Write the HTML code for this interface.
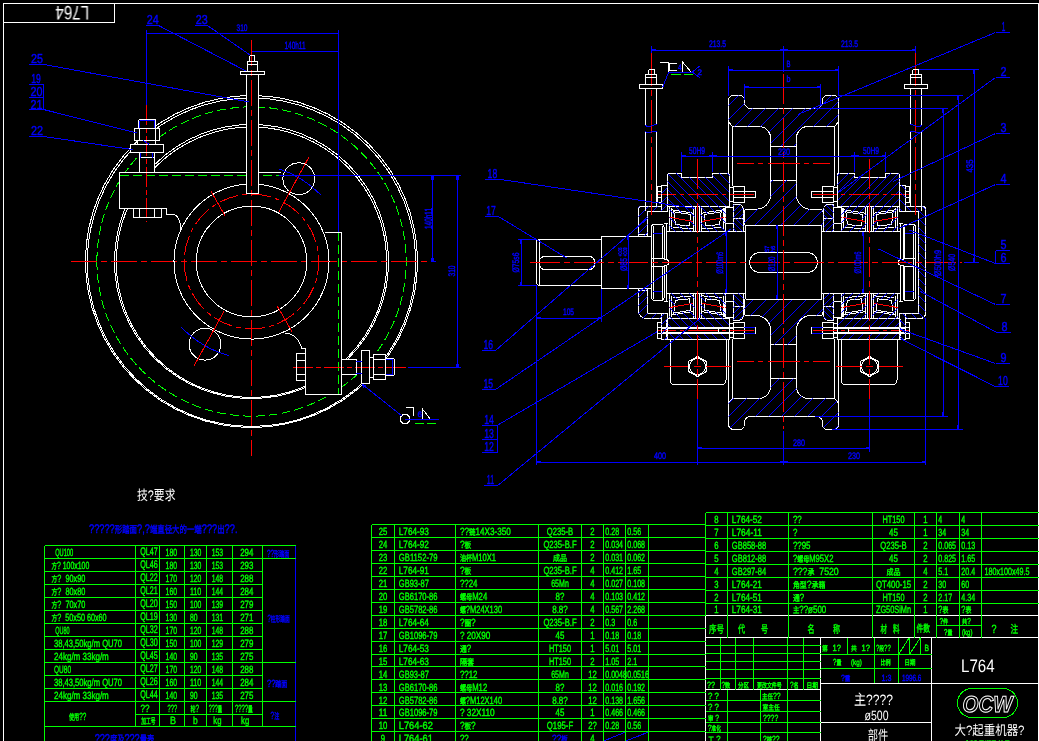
<!DOCTYPE html>
<html><head><meta charset="utf-8"><title>L764</title>
<style>html,body{margin:0;padding:0;background:#000;overflow:hidden}svg{display:block}</style>
</head><body>
<svg width="1039" height="741" viewBox="0 0 1039 741" shape-rendering="crispEdges" fill="none" stroke-width="1" font-family="'Liberation Sans', 'Noto Sans CJK SC', sans-serif">
<defs><clipPath id="k1"><path clip-rule="evenodd" d="M728.5 121.6V100.4A5 5 0 0 1 733.5 95.4H739.8A4.5 4.5 0 0 1 744.3 99.9V102A6.5 6.5 0 0 0 750.8 108.5H816.2A6.5 6.5 0 0 0 822.7 102V99.9A4.5 4.5 0 0 1 827.2 95.4H833.5A5 5 0 0 1 838.5 100.4V121.6L834.7 126.5H807.7A11.5 12.8 0 0 0 796.2 139.3V146H770.8V139.3A11.5 12.8 0 0 0 759.3 126.5H732.3Z"/></clipPath><clipPath id="k2"><path clip-rule="evenodd" d="M770.8 180V194A14.5 15.3 0 0 1 756.3 209.3H747A3 3 0 0 0 744 212.3V225.4H823V212.3A3 3 0 0 0 820 209.3H810.7A14.5 15.3 0 0 1 796.2 194V180Z"/></clipPath><clipPath id="k3"><path clip-rule="evenodd" d="M728.5 121.6V100.4A5 5 0 0 1 733.5 95.4H739.8A4.5 4.5 0 0 1 744.3 99.9V102A6.5 6.5 0 0 0 750.8 108.5H816.2A6.5 6.5 0 0 0 822.7 102V99.9A4.5 4.5 0 0 1 827.2 95.4H833.5A5 5 0 0 1 838.5 100.4V121.6L834.7 126.5H807.7A11.5 12.8 0 0 0 796.2 139.3V146H770.8V139.3A11.5 12.8 0 0 0 759.3 126.5H732.3Z" transform="translate(0,524.8) scale(1,-1)"/></clipPath><clipPath id="k4"><path clip-rule="evenodd" d="M770.8 180V194A14.5 15.3 0 0 1 756.3 209.3H747A3 3 0 0 0 744 212.3V225.4H823V212.3A3 3 0 0 0 820 209.3H810.7A14.5 15.3 0 0 1 796.2 194V180Z" transform="translate(0,524.8) scale(1,-1)"/></clipPath><clipPath id="k5"><path clip-rule="evenodd" d="M667.4 206.2V176A3 3 0 0 1 670.4 173H681.6V177.3H712.4V173H726.8A3 3 0 0 1 729.8 176V206.2ZM669.4 206.2H725.6V231.5H669.4ZM673.8 211.8L690.8 214.5L689.6 226.0L675.4 224.5ZM721.2 211.8L704.2 214.5L705.4 226.0L719.6 224.5ZM695 206.2H700V231.5H695Z"/></clipPath><clipPath id="k6"><path clip-rule="evenodd" d="M669.4 206.2H725.6V231.5H669.4ZM673.8 211.8L690.8 214.5L689.6 226.0L675.4 224.5ZM721.2 211.8L704.2 214.5L705.4 226.0L719.6 224.5ZM695 206.2H700V231.5H695Z" transform="translate(0,524.8) scale(1,-1)"/></clipPath><clipPath id="k7"><path clip-rule="evenodd" d="M666.2 318.5H729.6V339H666.2ZM661 327.4H735V333.6H661Z"/></clipPath><clipPath id="k8"><path clip-rule="evenodd" d="M667.4 206.2V176A3 3 0 0 1 670.4 173H681.6V177.3H712.4V173H726.8A3 3 0 0 1 729.8 176V206.2ZM669.4 206.2H725.6V231.5H669.4ZM673.8 211.8L690.8 214.5L689.6 226.0L675.4 224.5ZM721.2 211.8L704.2 214.5L705.4 226.0L719.6 224.5ZM695 206.2H700V231.5H695Z" transform="translate(1567,0) scale(-1,1)"/></clipPath><clipPath id="k9"><path clip-rule="evenodd" d="M669.4 206.2H725.6V231.5H669.4ZM673.8 211.8L690.8 214.5L689.6 226.0L675.4 224.5ZM721.2 211.8L704.2 214.5L705.4 226.0L719.6 224.5ZM695 206.2H700V231.5H695Z" transform="translate(1567,524.8) scale(-1,-1)"/></clipPath><clipPath id="k10"><path clip-rule="evenodd" d="M666.2 318.5H729.6V339H666.2ZM661 327.4H735V333.6H661Z" transform="translate(1567,0) scale(-1,1)"/></clipPath><clipPath id="k11"><path clip-rule="evenodd" d="M638.3 206.4H661.3V185H667.4V211H647.5V236H638.3Z"/></clipPath><clipPath id="k12"><path clip-rule="evenodd" d="M638.3 206.4H661.3V185H667.4V211H647.5V236H638.3Z" transform="translate(0,524.8) scale(1,-1)"/></clipPath><clipPath id="k13"><path clip-rule="evenodd" d="M733.2 204.7H743.3V218.5H733.2Z"/></clipPath><clipPath id="k14"><path clip-rule="evenodd" d="M733.2 218.5H743.3V231.6H733.2Z"/></clipPath><clipPath id="k15"><path clip-rule="evenodd" d="M733.2 204.7H743.3V218.5H733.2Z" transform="translate(0,524.8) scale(1,-1)"/></clipPath><clipPath id="k16"><path clip-rule="evenodd" d="M733.2 218.5H743.3V231.6H733.2Z" transform="translate(0,524.8) scale(1,-1)"/></clipPath><clipPath id="k17"><path clip-rule="evenodd" d="M733.2 204.7H743.3V218.5H733.2Z" transform="translate(1567,0) scale(-1,1)"/></clipPath><clipPath id="k18"><path clip-rule="evenodd" d="M733.2 218.5H743.3V231.6H733.2Z" transform="translate(1567,0) scale(-1,1)"/></clipPath><clipPath id="k19"><path clip-rule="evenodd" d="M733.2 204.7H743.3V218.5H733.2Z" transform="translate(1567,524.8) scale(-1,-1)"/></clipPath><clipPath id="k20"><path clip-rule="evenodd" d="M733.2 218.5H743.3V231.6H733.2Z" transform="translate(1567,524.8) scale(-1,-1)"/></clipPath><clipPath id="k21"><path clip-rule="evenodd" d="M899.7 185H905.7V206.4H925.5V318.4H905.7V339.8H899.7V313.8H918.6V211H899.7Z"/></clipPath></defs>
<rect width="1039" height="741" fill="#000"/>
<path d="M96.9 261.5A154.6 154.6 0 1 0 406.1 261.5A154.6 154.6 0 1 0 96.9 261.5" stroke="#00ff00" stroke-dasharray="9 4"/>
<path stroke="#ffffff" d="M3.5 741L3.5 3.5L1038.5 3.5L1038.5 741M3.5 22.5L114.5 22.5L114.5 3.5M85.5 261.5A166 166 0 1 0 417.5 261.5A166 166 0 1 0 85.5 261.5M87.3 262.2A164.2 164.2 0 1 0 415.7 262.2A164.2 164.2 0 1 0 87.3 262.2M114.5 261.5A137 137 0 1 0 388.5 261.5A137 137 0 1 0 114.5 261.5M116.3 262.2A135.2 135.2 0 1 0 386.7 262.2A135.2 135.2 0 1 0 116.3 262.2"/>
<path d="M119.5 172L281 172L281 176L166 176L166 208.5L119.5 208.5Z" fill="#000" stroke="none"/>
<path d="M138.5 119.2L155 119.2L155 128L138.5 128Z" fill="#000" stroke="none"/>
<path d="M134.6 128L159.7 128L159.7 140.3L134.6 140.3Z" fill="#000" stroke="none"/>
<path d="M137.7 140.3L155.4 140.3L155.4 144.3L137.7 144.3Z" fill="#000" stroke="none"/>
<path d="M130.3 144.3L163.6 144.3L163.6 152.7L130.3 152.7Z" fill="#000" stroke="none"/>
<path d="M139.7 152.7L154.2 152.7L154.2 172L139.7 172Z" fill="#000" stroke="none"/>
<path d="M133 208L161 208L161 217.5L133 217.5Z" fill="#000" stroke="none"/>
<path d="M296 353L305.7 353L305.7 348.5L341.6 348.5L341.6 394.4L305.7 394.4L305.7 380.5L296 380.5Z" fill="#000" stroke="none"/>
<path d="M341.6 359.3L361.9 359.3L361.9 374.7L341.6 374.7Z" fill="#000" stroke="none"/>
<path d="M361.9 350.5L369.3 350.5L369.3 383.4L361.9 383.4Z" fill="#000" stroke="none"/>
<path d="M369.3 357.4L373.5 357.4L373.5 377L369.3 377Z" fill="#000" stroke="none"/>
<path d="M373.5 354.6L385.5 354.6L385.5 379.3L373.5 379.3Z" fill="#000" stroke="none"/>
<path d="M385.5 358.5L394.4 358.5L394.4 375.4L385.5 375.4Z" fill="#000" stroke="none"/>
<path d="M324.5 232H341.6V394.4H305.7V348.5Z" fill="#000" stroke="none"/>
<path d="M184.2 261.5A67.3 67.3 0 1 0 318.8 261.5A67.3 67.3 0 1 0 184.2 261.5" stroke="#ff0000" stroke-dasharray="20 4 5 4"/>
<path d="M71 261.5L432.5 261.5" stroke="#ff0000" stroke-dasharray="26 4 6 4"/>
<path d="M251.5 40L251.5 456" stroke="#ff0000" stroke-dasharray="26 4 6 4"/>
<path d="M119.5 175.5L281 175.5" stroke="#00ff00" stroke-dasharray="9 4"/>
<path d="M146.5 105L146.5 222" stroke="#ff0000" stroke-dasharray="20 3 5 3"/>
<path stroke="#ffffff" d="M174 261.5A77.5 77.5 0 1 0 329 261.5A77.5 77.5 0 1 0 174 261.5M196.2 261.5A55.3 55.3 0 1 0 306.8 261.5A55.3 55.3 0 1 0 196.2 261.5M282.9 178.7A15.9 15.9 0 1 0 314.7 178.7A15.9 15.9 0 1 0 282.9 178.7M189.1 344.2A15.9 15.9 0 1 0 220.9 344.2A15.9 15.9 0 1 0 189.1 344.2M281 172.5L119.5 172.5L119.5 208.5L166.5 208.5L166.5 214.5M166 214.5H172A8 14 0 0 1 180.5 232M133.5 208.5L133.5 217.5L161.5 217.5L161.5 208.5M139.5 208.5L139.5 217.5M154.5 208.5L154.5 217.5M140 119.5H154A1.5 1.5 0 0 1 155.5 121V127A1.5 1.5 0 0 1 154 128.5H140A1.5 1.5 0 0 1 138.5 127V121A1.5 1.5 0 0 1 140 119.5ZM134.5 128.5L159.5 128.5L159.5 140.5L134.5 140.5ZM139.5 128L139.5 140.3M155.5 128L155.5 140.3M137.5 140.5L155.5 140.5L155.5 144.5L137.5 144.5ZM130.5 144.5L163.5 144.5L163.5 152.5L130.5 152.5ZM139.5 152.7L139.5 172M154.5 152.7L154.5 172M139.7 157.5L154.2 157.5"/>
<path stroke="#0000ff" d="M181 327Q203 349 229 355.5M279 169Q302 176 321 195M139.5 121L139.5 128M154.5 121L154.5 128M139.7 120.5L154.6 120.5M143 140.3L149 144.3M140.5 152.7L140.5 157.7M152.5 152.7L152.5 157.7M146.5 30L146.5 105"/>
<path stroke="#ff0000" d="M279 211.6L309.1 156.8M224 311.4L193.9 366.2M225.5 216.5L211 191.4M277.5 306.5L292 331.6"/>
<path d="M246.3 55L258.1 55L258.1 193.5L246.3 193.5Z" fill="#000" stroke="none"/>
<path d="M240 71L264 71L264 74.5L240 74.5Z" fill="#000" stroke="none"/>
<path d="M251.5 40L251.5 200" stroke="#ff0000" stroke-dasharray="26 4 6 4"/>
<path d="M338.5 232L338.5 394.4" stroke="#00ff00" stroke-dasharray="9 4"/>
<path d="M293 367.5L408 367.5" stroke="#ff0000" stroke-dasharray="20 3 5 3"/>
<path d="M415 423.5L436 423.5" stroke="#00ff00" stroke-dasharray="9 3"/>
<path stroke="#ffffff" d="M251 55.5H253A1.5 1.5 0 0 1 254.5 57V60A1.5 1.5 0 0 1 253 61.5H251A1.5 1.5 0 0 1 249.5 60V57A1.5 1.5 0 0 1 251 55.5ZM247.5 61.5L257.5 61.5L257.5 71.5L247.5 71.5ZM247.5 64.5L257 64.5M240.5 71.5L264.5 71.5L264.5 74.5L240.5 74.5ZM246.5 74.5L246.5 193.5L258.5 193.5L258.5 74.5M324.5 232.5L341.5 232.5L341.5 394.5L305.5 394.5L305.5 348.5L301.6 348.5M301.6 348.5C300 340 294 334 285.4 333M305.7 353.5L296.5 353.5L296.5 380.5L305.7 380.5M296.2 360.5L305.7 360.5M296.2 374.5L305.7 374.5M341.6 359.5L356.5 359.5L356.5 374.5L341.6 374.5M361.5 350.5L369.5 350.5L369.5 383.5L361.5 383.5ZM369.5 357.5L373.5 357.5L373.5 377.5L369.5 377.5ZM373.5 354.5L385.5 354.5L385.5 379.5L373.5 379.5ZM373.5 359.5L385.5 359.5M373.5 374.5L385.5 374.5M385.5 358.5H393A1.5 1.5 0 0 1 394.4 360V374A1.5 1.5 0 0 1 393 375.4H385.5M400.2 419A4.8 4.8 0 1 0 409.8 419A4.8 4.8 0 1 0 400.2 419M406.3 407.5L413.5 407.5L413.5 416.2M422.5 409L422.5 419.5L430.5 419.5Z"/>
<path stroke="#0000ff" d="M338.5 30L338.5 232M356.2 361.5L361.9 361.5M356.2 373.5L361.9 373.5M385.5 359.5L392.7 359.5M385.5 374.5L392.7 374.5M392.5 359.7L392.5 374.2M408 367.5L460.5 367.5M146.5 33.5L338.5 33.5M251.5 51.5L338.5 51.5M279 175.5L460.5 175.5M432.5 175.5L432.5 261.5M457.5 175.5L457.5 367.5M432.5 261.5L436 261.5M146.5 33.5L150.5 33.5M338.5 33.5L334.5 33.5M251.5 51.5L255.5 51.5M338.5 51.5L334.5 51.5M431.5 175.5L431.5 179.5M433.5 175.5L433.5 179.5M431.5 261.5L431.5 257.5M433.5 261.5L433.5 257.5M456.5 175.5L456.5 179.5M458.5 175.5L458.5 179.5M456.5 367.5L456.5 363.5M458.5 367.5L458.5 363.5M146 25.5L158.5 25.5M158.5 25.5L246 71M195 25.5L207.5 25.5M207.5 25.5L250 55M29 64.5L44 64.5M44 64.5L249 102M29 84.5L43.5 84.5M29 97.5L43.5 97.5M29 109.5L43.5 109.5M43.5 84.5L43.5 109.5M43.5 109.5L136.6 133M29 136.5L44 136.5M44 136.5L132.6 149.6M362.4 384.4L402 416M405 419.5L439 419.5M362.4 384.4L366 385.5M362.4 384.4L363.5 388"/>
<path stroke="#ffffff" d="M728.5 186V100.4A5 5 0 0 1 733.5 95.4H739.8A4.5 4.5 0 0 1 744.3 99.9V102A6.5 6.5 0 0 0 750.8 108.5H783.5M728.5 121.6L732.3 126.5H759.3A11.5 12.8 0 0 1 770.8 139.3V194A14.5 15.3 0 0 1 756.3 209.3H747A3 3 0 0 0 744 212.3V225.4M732.5 126.5L732.5 186M770.8 146.5L783.5 146.5M770.8 180.5L783.5 180.5"/><path stroke="#ff0000" d="M737 163.5L754 163.5M758 163.5L763 163.5M767.5 163.5L783.5 163.5"/>
<g transform="translate(1567,0) scale(-1,1)"><path stroke="#ffffff" d="M728.5 186V100.4A5 5 0 0 1 733.5 95.4H739.8A4.5 4.5 0 0 1 744.3 99.9V102A6.5 6.5 0 0 0 750.8 108.5H783.5M728.5 121.6L732.3 126.5H759.3A11.5 12.8 0 0 1 770.8 139.3V194A14.5 15.3 0 0 1 756.3 209.3H747A3 3 0 0 0 744 212.3V225.4M732.5 126.5L732.5 186M770.8 146.5L783.5 146.5M770.8 180.5L783.5 180.5"/><path stroke="#ff0000" d="M737 163.5L754 163.5M758 163.5L763 163.5M767.5 163.5L783.5 163.5"/></g>
<g transform="translate(0,524.8) scale(1,-1)"><path stroke="#ffffff" d="M728.5 186V100.4A5 5 0 0 1 733.5 95.4H739.8A4.5 4.5 0 0 1 744.3 99.9V102A6.5 6.5 0 0 0 750.8 108.5H783.5M728.5 121.6L732.3 126.5H759.3A11.5 12.8 0 0 1 770.8 139.3V194A14.5 15.3 0 0 1 756.3 209.3H747A3 3 0 0 0 744 212.3V225.4M732.5 126.5L732.5 186M770.8 146.5L783.5 146.5M770.8 180.5L783.5 180.5"/><path stroke="#ff0000" d="M737 163.5L754 163.5M758 163.5L763 163.5M767.5 163.5L783.5 163.5"/></g>
<g transform="translate(1567,524.8) scale(-1,-1)"><path stroke="#ffffff" d="M728.5 186V100.4A5 5 0 0 1 733.5 95.4H739.8A4.5 4.5 0 0 1 744.3 99.9V102A6.5 6.5 0 0 0 750.8 108.5H783.5M728.5 121.6L732.3 126.5H759.3A11.5 12.8 0 0 1 770.8 139.3V194A14.5 15.3 0 0 1 756.3 209.3H747A3 3 0 0 0 744 212.3V225.4M732.5 126.5L732.5 186M770.8 146.5L783.5 146.5M770.8 180.5L783.5 180.5"/><path stroke="#ff0000" d="M737 163.5L754 163.5M758 163.5L763 163.5M767.5 163.5L783.5 163.5"/></g>
<path clip-path="url(#k1)" d="M671 150L731 90M684 150L744 90M698 150L758 90M711 150L771 90M724 150L784 90M737 150L797 90M751 150L811 90M764 150L824 90M777 150L837 90M790 150L850 90M803 150L863 90M817 150L877 90M830 150L890 90M843 150L903 90" stroke="#0000ff"/>
<path clip-path="url(#k2)" d="M697 230L752 175M710 230L765 175M723 230L778 175M737 230L792 175M750 230L805 175M763 230L818 175M776 230L831 175M789 230L844 175M803 230L858 175M816 230L871 175M829 230L884 175" stroke="#0000ff"/>
<path clip-path="url(#k3)" d="M671 435L731 375M684 435L744 375M697 435L757 375M710 435L770 375M723 435L783 375M737 435L797 375M750 435L810 375M763 435L823 375M776 435L836 375M789 435L849 375M803 435L863 375M816 435L876 375M829 435L889 375M842 435L902 375" stroke="#0000ff"/>
<path clip-path="url(#k4)" d="M690 350L745 295M703 350L758 295M716 350L771 295M729 350L784 295M742 350L797 295M756 350L811 295M769 350L824 295M782 350L837 295M795 350L850 295M808 350L863 295M822 350L877 295" stroke="#0000ff"/>
<path stroke="#ffffff" d="M536.5 262.4L536.5 241L538.4 239.5L601.4 239.5M539.5 239.4L539.5 262.4M601.5 262.4L601.5 236.5L651.6 236.5M666.2 231.5L745.5 231.5M745.5 225.4L745.5 262.4M745.5 225.5L821.5 225.5M821.5 225.4L821.5 262.4M821.5 231.5L900.8 231.5"/>
<g transform="translate(0,524.8) scale(1,-1)"><path stroke="#ffffff" d="M536.5 262.4L536.5 241L538.4 239.5L601.4 239.5M539.5 239.4L539.5 262.4M601.5 262.4L601.5 236.5L651.6 236.5M666.2 231.5L745.5 231.5M745.5 225.4L745.5 262.4M745.5 225.5L821.5 225.5M821.5 225.4L821.5 262.4M821.5 231.5L900.8 231.5"/></g>
<path stroke="#ffffff" d="M544.5 256.5H589.5A5 5 0 0 1 594.5 261.5V264.5A5 5 0 0 1 589.5 269.5H544.5A5 5 0 0 1 539.5 264.5V261.5A5 5 0 0 1 544.5 256.5ZM759.4 252.5H807.6A9.9 9.9 0 0 1 817.5 262.4V262.6A9.9 9.9 0 0 1 807.6 272.5H759.4A9.9 9.9 0 0 1 749.5 262.6V262.4A9.9 9.9 0 0 1 759.4 252.5Z"/>
<path stroke="#ffffff" d="M651.6 262.4V227A2.4 2.4 0 0 1 654 224.6H661.6A2.4 2.4 0 0 1 664 227V259.3A5 3.2 0 0 1 669 262.4M653.5 226L653.5 262.4M662.5 226L662.5 258.2M651.6 258.5L664 258.5M666.5 223.3L666.5 259.6M664 223.5L667.7 223.5"/><path stroke="#0000ff" d="M653.2 233.5L662.4 233.5"/>
<g transform="translate(1567,0) scale(-1,1)"><path stroke="#ffffff" d="M651.6 262.4V227A2.4 2.4 0 0 1 654 224.6H661.6A2.4 2.4 0 0 1 664 227V259.3A5 3.2 0 0 1 669 262.4M653.5 226L653.5 262.4M662.5 226L662.5 258.2M651.6 258.5L664 258.5M666.5 223.3L666.5 259.6M664 223.5L667.7 223.5"/><path stroke="#0000ff" d="M653.2 233.5L662.4 233.5"/></g>
<g transform="translate(0,524.8) scale(1,-1)"><path stroke="#ffffff" d="M651.6 262.4V227A2.4 2.4 0 0 1 654 224.6H661.6A2.4 2.4 0 0 1 664 227V259.3A5 3.2 0 0 1 669 262.4M653.5 226L653.5 262.4M662.5 226L662.5 258.2M651.6 258.5L664 258.5M666.5 223.3L666.5 259.6M664 223.5L667.7 223.5"/><path stroke="#0000ff" d="M653.2 233.5L662.4 233.5"/></g>
<g transform="translate(1567,524.8) scale(-1,-1)"><path stroke="#ffffff" d="M651.6 262.4V227A2.4 2.4 0 0 1 654 224.6H661.6A2.4 2.4 0 0 1 664 227V259.3A5 3.2 0 0 1 669 262.4M653.5 226L653.5 262.4M662.5 226L662.5 258.2M651.6 258.5L664 258.5M666.5 223.3L666.5 259.6M664 223.5L667.7 223.5"/><path stroke="#0000ff" d="M653.2 233.5L662.4 233.5"/></g>
<path fill-rule="nonzero" d="M667.4 206.2V176A3 3 0 0 1 670.4 173H681.6V177.3H712.4V173H726.8A3 3 0 0 1 729.8 176V206.2ZM666.2 318.5H729.6V339H726V384.4H670V339H666.2Z" fill="#000" stroke="none"/>
<path fill-rule="nonzero" d="M667.4 206.2V176A3 3 0 0 1 670.4 173H681.6V177.3H712.4V173H726.8A3 3 0 0 1 729.8 176V206.2ZM666.2 318.5H729.6V339H726V384.4H670V339H666.2Z" fill="#000" stroke="none" transform="translate(1567,0) scale(-1,1)"/>
<path stroke="#ffffff" d="M673.8 211.8L690.8 214.5L689.6 226L675.4 224.5ZM669.5 206.2L669.5 231.5M671.5 208L671.5 229M671.5 209.8L693.5 213.2M673 227.2L693.5 229M693.5 206.2L693.5 231.5M695.5 206.2L695.5 231.5"/><path stroke="#ff0000" d="M669.2 217.2L692.7 221.4"/><g transform="translate(1395,0) scale(-1,1)"><path stroke="#ffffff" d="M673.8 211.8L690.8 214.5L689.6 226L675.4 224.5ZM669.5 206.2L669.5 231.5M671.5 208L671.5 229M671.5 209.8L693.5 213.2M673 227.2L693.5 229M693.5 206.2L693.5 231.5M695.5 206.2L695.5 231.5"/><path stroke="#ff0000" d="M669.2 217.2L692.7 221.4"/></g><path stroke="#ffffff" d="M667.4 206.5L729.8 206.5"/>
<g transform="translate(1567,0) scale(-1,1)"><path stroke="#ffffff" d="M673.8 211.8L690.8 214.5L689.6 226L675.4 224.5ZM669.5 206.2L669.5 231.5M671.5 208L671.5 229M671.5 209.8L693.5 213.2M673 227.2L693.5 229M693.5 206.2L693.5 231.5M695.5 206.2L695.5 231.5"/><path stroke="#ff0000" d="M669.2 217.2L692.7 221.4"/><g transform="translate(1395,0) scale(-1,1)"><path stroke="#ffffff" d="M673.8 211.8L690.8 214.5L689.6 226L675.4 224.5ZM669.5 206.2L669.5 231.5M671.5 208L671.5 229M671.5 209.8L693.5 213.2M673 227.2L693.5 229M693.5 206.2L693.5 231.5M695.5 206.2L695.5 231.5"/><path stroke="#ff0000" d="M669.2 217.2L692.7 221.4"/></g><path stroke="#ffffff" d="M667.4 206.5L729.8 206.5"/></g>
<g transform="translate(0,524.8) scale(1,-1)"><path stroke="#ffffff" d="M673.8 211.8L690.8 214.5L689.6 226L675.4 224.5ZM669.5 206.2L669.5 231.5M671.5 208L671.5 229M671.5 209.8L693.5 213.2M673 227.2L693.5 229M693.5 206.2L693.5 231.5M695.5 206.2L695.5 231.5"/><path stroke="#ff0000" d="M669.2 217.2L692.7 221.4"/><g transform="translate(1395,0) scale(-1,1)"><path stroke="#ffffff" d="M673.8 211.8L690.8 214.5L689.6 226L675.4 224.5ZM669.5 206.2L669.5 231.5M671.5 208L671.5 229M671.5 209.8L693.5 213.2M673 227.2L693.5 229M693.5 206.2L693.5 231.5M695.5 206.2L695.5 231.5"/><path stroke="#ff0000" d="M669.2 217.2L692.7 221.4"/></g><path stroke="#ffffff" d="M667.4 206.5L729.8 206.5"/></g>
<g transform="translate(1567,524.8) scale(-1,-1)"><path stroke="#ffffff" d="M673.8 211.8L690.8 214.5L689.6 226L675.4 224.5ZM669.5 206.2L669.5 231.5M671.5 208L671.5 229M671.5 209.8L693.5 213.2M673 227.2L693.5 229M693.5 206.2L693.5 231.5M695.5 206.2L695.5 231.5"/><path stroke="#ff0000" d="M669.2 217.2L692.7 221.4"/><g transform="translate(1395,0) scale(-1,1)"><path stroke="#ffffff" d="M673.8 211.8L690.8 214.5L689.6 226L675.4 224.5ZM669.5 206.2L669.5 231.5M671.5 208L671.5 229M671.5 209.8L693.5 213.2M673 227.2L693.5 229M693.5 206.2L693.5 231.5M695.5 206.2L695.5 231.5"/><path stroke="#ff0000" d="M669.2 217.2L692.7 221.4"/></g><path stroke="#ffffff" d="M667.4 206.5L729.8 206.5"/></g>
<path stroke="#ffffff" d="M667.4 206.2V176A3 3 0 0 1 670.4 173H681.6V177.3H712.4V173H726.8A3 3 0 0 1 729.8 176V206.2M666.5 318.5L666.5 339.5L729.5 339.5L729.5 318.5M670 339V380.4A4 4 0 0 0 674 384.4H722A4 4 0 0 0 726 380.4V339M689.5 366.5A8 8 0 1 0 705.5 366.5A8 8 0 1 0 689.5 366.5M697.5 356.5L688.5 361.5L688.5 371.5L697.5 376.5L706.5 371.5L706.5 361.5ZM726.5 207.5H731.5A2 2 0 0 1 733.5 209.5V221.5A2 2 0 0 1 731.5 223.5H726.5A2 2 0 0 1 724.5 221.5V209.5A2 2 0 0 1 726.5 207.5ZM726.5 301.5H731.5A2 2 0 0 1 733.5 303.5V315.5A2 2 0 0 1 731.5 317.5H726.5A2 2 0 0 1 724.5 315.5V303.5A2 2 0 0 1 726.5 301.5ZM733.2 231.6V204.7H739.5A3.8 5 0 0 1 743.3 209.7V231.6M733.2 218.5L743.3 218.5M733.2 293.2V320.1H739.5A3.8 5 0 0 0 743.3 315.1V293.2M733.2 306.5L743.3 306.5"/><path stroke="#ff0000" d="M664 366.5L687.8 366.5M694 366.5L701 366.5M705.5 366.5L731 366.5"/>
<g transform="translate(1567,0) scale(-1,1)"><path stroke="#ffffff" d="M667.4 206.2V176A3 3 0 0 1 670.4 173H681.6V177.3H712.4V173H726.8A3 3 0 0 1 729.8 176V206.2M666.5 318.5L666.5 339.5L729.5 339.5L729.5 318.5M670 339V380.4A4 4 0 0 0 674 384.4H722A4 4 0 0 0 726 380.4V339M689.5 366.5A8 8 0 1 0 705.5 366.5A8 8 0 1 0 689.5 366.5M697.5 356.5L688.5 361.5L688.5 371.5L697.5 376.5L706.5 371.5L706.5 361.5ZM726.5 207.5H731.5A2 2 0 0 1 733.5 209.5V221.5A2 2 0 0 1 731.5 223.5H726.5A2 2 0 0 1 724.5 221.5V209.5A2 2 0 0 1 726.5 207.5ZM726.5 301.5H731.5A2 2 0 0 1 733.5 303.5V315.5A2 2 0 0 1 731.5 317.5H726.5A2 2 0 0 1 724.5 315.5V303.5A2 2 0 0 1 726.5 301.5ZM733.2 231.6V204.7H739.5A3.8 5 0 0 1 743.3 209.7V231.6M733.2 218.5L743.3 218.5M733.2 293.2V320.1H739.5A3.8 5 0 0 0 743.3 315.1V293.2M733.2 306.5L743.3 306.5"/><path stroke="#ff0000" d="M664 366.5L687.8 366.5M694 366.5L701 366.5M705.5 366.5L731 366.5"/></g>
<path clip-path="url(#k5)" d="M596 170L661 235M605 170L670 235M614 170L679 235M622 170L687 235M630 170L695 235M639 170L704 235M648 170L713 235M656 170L721 235M664 170L729 235M673 170L738 235M682 170L747 235M690 170L755 235M698 170L763 235M707 170L772 235M716 170L781 235M724 170L789 235M732 170L797 235" stroke="#0000ff"/>
<path clip-path="url(#k6)" d="M609 290L664 345M618 290L673 345M626 290L681 345M634 290L689 345M643 290L698 345M652 290L707 345M660 290L715 345M668 290L723 345M677 290L732 345M686 290L741 345M694 290L749 345M702 290L757 345M711 290L766 345M720 290L775 345M728 290L783 345" stroke="#0000ff"/>
<path clip-path="url(#k7)" d="M634 315L661 342M643 315L670 342M651 315L678 342M659 315L686 342M668 315L695 342M677 315L704 342M685 315L712 342M693 315L720 342M702 315L729 342M711 315L738 342M719 315L746 342M727 315L754 342M736 315L763 342" stroke="#0000ff"/>
<path clip-path="url(#k8)" d="M769 235L834 170M778 235L843 170M787 235L852 170M795 235L860 170M803 235L868 170M812 235L877 170M821 235L886 170M829 235L894 170M837 235L902 170M846 235L911 170M855 235L920 170M863 235L928 170M871 235L936 170M880 235L945 170M889 235L954 170M897 235L962 170" stroke="#0000ff"/>
<path clip-path="url(#k9)" d="M775 345L830 290M784 345L839 290M793 345L848 290M801 345L856 290M809 345L864 290M818 345L873 290M827 345L882 290M835 345L890 290M843 345L898 290M852 345L907 290M861 345L916 290M869 345L924 290M877 345L932 290M886 345L941 290M895 345L950 290M903 345L958 290" stroke="#0000ff"/>
<path clip-path="url(#k10)" d="M804 342L831 315M812 342L839 315M821 342L848 315M830 342L857 315M838 342L865 315M846 342L873 315M855 342L882 315M864 342L891 315M872 342L899 315M880 342L907 315M889 342L916 315M898 342L925 315M906 342L933 315" stroke="#0000ff"/>
<path stroke="#ffffff" d="M657.5 186.5L661.5 186.5L661.5 202.5L657.5 202.5ZM657 191.5L661.3 191.5M657 197.5L661.3 197.5M729.5 187.5L733.5 187.5L733.5 201.5L729.5 201.5ZM733.5 186.5L744.5 186.5L744.5 202.5L733.5 202.5ZM733.6 191.5L744.4 191.5M733.6 197.5L744.4 197.5M744.5 191.5L755.5 191.5L755.5 197.5L744.5 197.5Z"/><path stroke="#ff0000" d="M658 194.5L676 194.5M680 194.5L684 194.5M688 194.5L718 194.5M722 194.5L726 194.5M730 194.5L754 194.5"/>
<g transform="translate(1567,0) scale(-1,1)"><path stroke="#ffffff" d="M657.5 186.5L661.5 186.5L661.5 202.5L657.5 202.5ZM657 191.5L661.3 191.5M657 197.5L661.3 197.5M729.5 187.5L733.5 187.5L733.5 201.5L729.5 201.5ZM733.5 186.5L744.5 186.5L744.5 202.5L733.5 202.5ZM733.6 191.5L744.4 191.5M733.6 197.5L744.4 197.5M744.5 191.5L755.5 191.5L755.5 197.5L744.5 197.5Z"/><path stroke="#ff0000" d="M658 194.5L676 194.5M680 194.5L684 194.5M688 194.5L718 194.5M722 194.5L726 194.5M730 194.5L754 194.5"/></g>
<g transform="translate(0,524.8) scale(1,-1)"><path stroke="#ffffff" d="M657.5 186.5L661.5 186.5L661.5 202.5L657.5 202.5ZM657 191.5L661.3 191.5M657 197.5L661.3 197.5M729.5 187.5L733.5 187.5L733.5 201.5L729.5 201.5ZM733.5 186.5L744.5 186.5L744.5 202.5L733.5 202.5ZM733.6 191.5L744.4 191.5M733.6 197.5L744.4 197.5M744.5 191.5L755.5 191.5L755.5 197.5L744.5 197.5Z"/><path stroke="#ff0000" d="M658 194.5L676 194.5M680 194.5L684 194.5M688 194.5L718 194.5M722 194.5L726 194.5M730 194.5L754 194.5"/></g>
<g transform="translate(1567,524.8) scale(-1,-1)"><path stroke="#ffffff" d="M657.5 186.5L661.5 186.5L661.5 202.5L657.5 202.5ZM657 191.5L661.3 191.5M657 197.5L661.3 197.5M729.5 187.5L733.5 187.5L733.5 201.5L729.5 201.5ZM733.5 186.5L744.5 186.5L744.5 202.5L733.5 202.5ZM733.6 191.5L744.4 191.5M733.6 197.5L744.4 197.5M744.5 191.5L755.5 191.5L755.5 197.5L744.5 197.5Z"/><path stroke="#ff0000" d="M658 194.5L676 194.5M680 194.5L684 194.5M688 194.5L718 194.5M722 194.5L726 194.5M730 194.5L754 194.5"/></g>
<path stroke="#ffffff" d="M661.3 327.5L734 327.5M661.3 328.5L734 328.5M661.3 333.5L734 333.5M661.3 332.5L734 332.5M718.5 327.4L718.5 333.6"/><path stroke="#0000ff" d="M744.4 327.5L755 327.5M744.4 333.5L755 333.5"/>
<g transform="translate(1567,0) scale(-1,1)"><path stroke="#ffffff" d="M661.3 327.5L734 327.5M661.3 328.5L734 328.5M661.3 333.5L734 333.5M661.3 332.5L734 332.5M718.5 327.4L718.5 333.6"/><path stroke="#0000ff" d="M744.4 327.5L755 327.5M744.4 333.5L755 333.5"/></g>
<path stroke="#ffffff" d="M661.3 206.4H641.5A3.2 3.2 0 0 0 638.3 209.6V236M647.5 236L647.5 211.5L661.3 211.5M661.5 185.5L667.5 185.5L667.5 211.5L661.5 211.5ZM638.3 234.5L647.5 234.5"/>
<path stroke="#ffffff" d="M661.3 318.4H646A7.7 7.7 0 0 1 638.3 310.7V288.8M647.5 288.8L647.5 313.5L661.3 313.5M661.5 313.5L667.5 313.5L667.5 339.5L661.5 339.5ZM638.3 290.5L647.5 290.5"/>
<path clip-path="url(#k11)" d="M583 238L638 183M592 238L647 183M600 238L655 183M608 238L663 183M617 238L672 183M626 238L681 183M634 238L689 183M642 238L697 183M651 238L706 183M660 238L715 183M668 238L723 183" stroke="#0000ff"/>
<path clip-path="url(#k12)" d="M585 342L641 286M594 342L650 286M602 342L658 286M610 342L666 286M619 342L675 286M628 342L684 286M636 342L692 286M644 342L700 286M653 342L709 286M662 342L718 286" stroke="#0000ff"/>
<path clip-path="url(#k13)" d="M700 233L730 203M706 233L736 203M712 233L742 203M718 233L748 203M724 233L754 203M730 233L760 203M736 233L766 203M742 233L772 203" stroke="#0000ff"/>
<path clip-path="url(#k14)" d="M702 203L732 233M708 203L738 233M714 203L744 233M720 203L750 233M726 203L756 233M732 203L762 233M738 203L768 233M744 203L774 233" stroke="#0000ff"/>
<path clip-path="url(#k15)" d="M701 322L732 291M707 322L738 291M713 322L744 291M719 322L750 291M725 322L756 291M731 322L762 291M737 322L768 291M743 322L774 291" stroke="#0000ff"/>
<path clip-path="url(#k16)" d="M700 291L731 322M706 291L737 322M712 291L743 322M718 291L749 322M724 291L755 322M730 291L761 322M736 291L767 322M742 291L773 322" stroke="#0000ff"/>
<path clip-path="url(#k17)" d="M794 203L824 233M800 203L830 233M806 203L836 233M812 203L842 233M818 203L848 233M824 203L854 233M830 203L860 233M836 203L866 233" stroke="#0000ff"/>
<path clip-path="url(#k18)" d="M794 233L824 203M800 233L830 203M806 233L836 203M812 233L842 203M818 233L848 203M824 233L854 203M830 233L860 203M836 233L866 203" stroke="#0000ff"/>
<path clip-path="url(#k19)" d="M792 291L823 322M798 291L829 322M804 291L835 322M810 291L841 322M816 291L847 322M822 291L853 322M828 291L859 322M834 291L865 322" stroke="#0000ff"/>
<path clip-path="url(#k20)" d="M789 322L820 291M795 322L826 291M801 322L832 291M807 322L838 291M813 322L844 291M819 322L850 291M825 322L856 291M831 322L862 291" stroke="#0000ff"/>
<path stroke="#ffffff" d="M905.7 206.4H922.5A3 3 0 0 1 925.5 209.4V262.4M918.5 262.4L918.5 211.5L905.7 211.5M899.5 185.5L905.5 185.5L905.5 211.5L899.5 211.5Z"/>
<path stroke="#ffffff" d="M905.7 318.4H920.5A5 5 0 0 0 925.5 313.4V262.4M918.5 262.4L918.5 313.5L905.7 313.5M899.5 313.5L905.5 313.5L905.5 339.5L899.5 339.5Z"/>
<path clip-path="url(#k21)" d="M747 183L906 342M755 183L914 342M763 183L922 342M772 183L931 342M781 183L940 342M789 183L948 342M797 183L956 342M806 183L965 342M815 183L974 342M823 183L982 342M831 183L990 342M840 183L999 342M849 183L1008 342M857 183L1016 342M865 183L1024 342M874 183L1033 342M883 183L1042 342M891 183L1050 342M899 183L1058 342M908 183L1067 342M917 183L1076 342M925 183L1084 342" stroke="#0000ff"/>
<path d="M651.5 53L651.5 214.7" stroke="#ff0000" stroke-dasharray="33 4 6 4"/><path stroke="#ffffff" d="M650 69.5H653A1.5 1.5 0 0 1 654.5 71V73A1.5 1.5 0 0 1 653 74.5H650A1.5 1.5 0 0 1 648.5 73V71A1.5 1.5 0 0 1 650 69.5ZM645.5 74.5L656.5 74.5L656.5 84.5L645.5 84.5ZM645.4 77.5L656.6 77.5M639.5 84.5L662.5 84.5L662.5 88.5L639.5 88.5ZM645.5 88.5L645.5 125.4M656.5 88.5L656.5 125.4M645.5 131.5L645.5 211M656.5 131.5L656.5 207"/><path stroke="#0000ff" d="M645.4 125.4Q648 127.5 651 126T656.6 125M645.4 131.5Q648 133.5 651 132T656.6 131.5M651.5 46L651.5 53"/>
<g transform="translate(1567,0) scale(-1,1)"><path d="M651.5 53L651.5 214.7" stroke="#ff0000" stroke-dasharray="33 4 6 4"/><path stroke="#ffffff" d="M650 69.5H653A1.5 1.5 0 0 1 654.5 71V73A1.5 1.5 0 0 1 653 74.5H650A1.5 1.5 0 0 1 648.5 73V71A1.5 1.5 0 0 1 650 69.5ZM645.5 74.5L656.5 74.5L656.5 84.5L645.5 84.5ZM645.4 77.5L656.6 77.5M639.5 84.5L662.5 84.5L662.5 88.5L639.5 88.5ZM645.5 88.5L645.5 125.4M656.5 88.5L656.5 125.4M645.5 131.5L645.5 211M656.5 131.5L656.5 207"/><path stroke="#0000ff" d="M645.4 125.4Q648 127.5 651 126T656.6 125M645.4 131.5Q648 133.5 651 132T656.6 131.5M651.5 46L651.5 53"/></g>
<path d="M530 262.5L962 262.5" stroke="#ff0000" stroke-dasharray="30 4 6 4"/>
<path d="M783.5 74L783.5 429" stroke="#ff0000" stroke-dasharray="30 4 6 4"/>
<path d="M697.5 159L697.5 398.5" stroke="#ff0000" stroke-dasharray="30 4 6 4"/>
<path d="M869.5 159L869.5 398.5" stroke="#ff0000" stroke-dasharray="30 4 6 4"/>
<rect x="957.5" y="688.5" width="60" height="29" rx="14.5" ry="14.5" stroke="#00ff00" shape-rendering="crispEdges"/>
<path stroke="#ffffff" d="M660 62.5L668.5 62.5L668.5 72M676.6 63.5L669.5 63.5L669.5 70.5L676.6 70.5M682.5 62L682.5 72.5L691.5 72.5ZM705.5 615.5L1038.5 615.5M705.5 637.5L1038.5 637.5M705.5 615.5L705.5 741M820.5 637.5L820.5 741M705.5 689.5L820.5 689.5M820.5 683.5L1038.5 683.5M820.5 722.5L931.5 722.5M931.5 637.5L931.5 741"/>
<path stroke="#0000ff" d="M964.4 262.5L978.8 262.5M783.5 431L783.5 465.4M783.5 60L783.5 72M697.5 398.5L697.5 465.4M651.5 50.5L915.5 50.5M783.5 46L783.5 72M651.5 49.5L655.5 49.5M783.5 49.5L779.5 49.5M783.5 49.5L787.5 49.5M915.5 49.5L911.5 49.5M728.5 70.5L838.5 70.5M728.5 66L728.5 96M838.5 66L838.5 96M744.5 87.5L820.5 87.5M744.5 84L744.5 100M820.5 84L820.5 105M728.5 69.5L732.5 69.5M838.5 69.5L834.5 69.5M744.5 86.5L748.5 86.5M820.5 86.5L816.5 86.5M681.5 156.5L885.5 156.5M681.5 152L681.5 172M712.5 152L712.5 172M854.5 152L854.5 172M885.5 152L885.5 172M681.5 155.5L685.5 155.5M712.5 155.5L708.5 155.5M712.5 155.5L716.5 155.5M854.5 155.5L850.5 155.5M854.5 155.5L858.5 155.5M885.5 155.5L881.5 155.5M517.8 239.5L536.8 239.5M517.8 285.5L536.8 285.5M521.5 239.5L521.5 285.5M520.5 239.5L520.5 243.5M520.5 285.5L520.5 281.5M628.5 236L628.5 288.6M627.5 236L627.5 240M627.5 288.6L627.5 284.6M726.5 231.6L726.5 293.2M725.5 231.6L725.5 235.6M725.5 293.2L725.5 289.2M863.5 231.6L863.5 293.2M862.5 231.6L862.5 235.6M862.5 293.2L862.5 289.2M777.5 225.4L777.5 299.3M776.5 225.4L776.5 229.4M776.5 299.3L776.5 295.3M815 108.5L948 108.5M815 416.5L948 416.5M943.5 108.5L943.5 416.3M838.5 95.5L963 95.5M832 429.5L963 429.5M958.5 95.5L958.5 429.3M918.7 69.5L979 69.5M974.5 69.5L974.5 262.4M942.5 108.5L942.5 112.5M942.5 416.3L942.5 412.3M957.5 95.5L957.5 99.5M957.5 429.3L957.5 425.3M973.5 69.5L973.5 73.5M973.5 262.4L973.5 258.4M536.5 285.5L536.5 465.4M601.5 288.6L601.5 321.5M536.5 318.5L601.5 318.5M536.5 317.5L540.5 317.5M601.5 317.5L597.5 317.5M536.5 462.5L925.5 462.5M925.5 318L925.5 465.4M536.5 461.5L540.5 461.5M783.5 461.5L779.5 461.5M783.5 461.5L787.5 461.5M925.5 461.5L921.5 461.5M697.5 448.5L869.5 448.5M869.5 398.5L869.5 452M697.5 398.5L697.5 452M697.5 447.5L701.5 447.5M869.5 447.5L865.5 447.5M995.5 32.5L1010 32.5M995.5 32.5L797.8 114.5M995.5 77.5L1010 77.5M995.5 77.5L838.5 192.5M995.5 133.5L1010 133.5M995.5 133.5L893 181.5M995.5 184.5L1010 184.5M995.5 184.5L898.6 228.7M995.5 250.5L1010 250.5M995.5 263.5L1010 263.5M995.5 250.5L995.5 263.5M995.5 263.5L909 230M995.5 304.5L1010 304.5M995.5 304.5L878.5 249M996.8 332.5L1010.6 332.5M996.8 332.5L920.5 291.5M995.5 363.5L1010 363.5M995.5 363.5L900.5 329.3M995.3 386.5L1009 386.5M995.3 386.5L899.8 338.5M484.8 179.5L501 179.5M501 179.5L695.4 208.5M484.8 216.5L498.4 216.5M498.4 216.5L567.5 258.4M482 350.5L495.5 350.5M495.5 350.5L648 218M482 389.5L495.5 389.5M495.5 389.5L731 229M482.3 425.5L497 425.5M497 425.5L657 331.8M482.3 439.5L497 439.5M482.3 452.5L497 452.5M497.5 425.5L497.5 452.5M484 485.5L497.7 485.5M497.7 485.5L700 318.5M662.8 87L668.5 72.5L692.3 72.5M699.7 66L692.3 72L699.7 77.7M295.5 545.5L295.5 741M603.5 741L625.5 732.1M625.5 741L648.5 732.1"/>
<path stroke="#00ff00" d="M670.8 74.5L680.8 74.5M683.9 74.5L692.7 74.5M44.5 545.5L44.5 741M135.5 545.5L135.5 726.5M159.5 545.5L159.5 726.5M184.5 545.5L184.5 726.5M206.5 545.5L206.5 726.5M232.5 545.5L232.5 726.5M262.5 545.5L262.5 726.5M44.5 545.5L295.5 545.5M44.5 558.5L295.5 558.5M44.5 571.5L262.5 571.5M44.5 584.5L262.5 584.5M44.5 597.5L262.5 597.5M44.5 610.5L262.5 610.5M44.5 623.5L262.5 623.5M44.5 636.5L262.5 636.5M44.5 649.5L262.5 649.5M44.5 662.5L295.5 662.5M44.5 675.5L262.5 675.5M44.5 688.5L262.5 688.5M44.5 701.5L295.5 701.5M135.5 714.5L262.5 714.5M44.5 726.5L295.5 726.5M371.5 524.6L371.5 741M394.5 524.6L394.5 741M455.5 524.6L455.5 741M538.5 524.6L538.5 741M581.5 524.6L581.5 741M603.5 524.6L603.5 741M625.5 524.6L625.5 741M648.5 524.6L648.5 741M371.5 524.5L705.5 524.5M371.5 537.5L705.5 537.5M371.5 550.5L705.5 550.5M371.5 563.5L705.5 563.5M371.5 576.5L705.5 576.5M371.5 589.5L705.5 589.5M371.5 602.5L705.5 602.5M371.5 615.5L705.5 615.5M371.5 628.5L705.5 628.5M371.5 641.5L705.5 641.5M371.5 654.5L705.5 654.5M371.5 666.5L705.5 666.5M371.5 679.5L705.5 679.5M371.5 692.5L705.5 692.5M371.5 705.5L705.5 705.5M371.5 718.5L705.5 718.5M371.5 731.5L705.5 731.5M705.5 512.5L705.5 615.5M727.5 512.5L727.5 615.5M788.5 512.5L788.5 615.5M872.5 512.5L872.5 615.5M914.5 512.5L914.5 615.5M936.5 512.5L936.5 615.5M959.5 512.5L959.5 615.5M981.5 512.5L981.5 615.5M705.5 512.5L1038.5 512.5M705.5 525.5L1038.5 525.5M705.5 538.5L1038.5 538.5M705.5 551.5L1038.5 551.5M705.5 564.5L1038.5 564.5M705.5 577.5L1038.5 577.5M705.5 590.5L1038.5 590.5M705.5 603.5L1038.5 603.5M727.5 615.5L727.5 637.5M788.5 615.5L788.5 637.5M872.5 615.5L872.5 637.5M914.5 615.5L914.5 637.5M936.5 615.5L936.5 637.5M959.5 615.5L959.5 637.5M981.5 615.5L981.5 637.5M936.5 625.5L981.5 625.5M720.5 637.5L720.5 689.5M735.5 637.5L735.5 689.5M753.5 637.5L753.5 689.5M787.5 637.5L787.5 689.5M803.5 637.5L803.5 689.5M705.5 645.5L820.5 645.5M705.5 653.5L820.5 653.5M705.5 661.5L820.5 661.5M705.5 669.5L820.5 669.5M705.5 678.5L820.5 678.5M727.5 689.5L727.5 741M760.5 689.5L760.5 741M787.5 689.5L787.5 741M705.5 700.5L820.5 700.5M705.5 711.5L820.5 711.5M705.5 722.5L820.5 722.5M705.5 732.5L820.5 732.5M820.5 654.5L931.5 654.5M820.5 668.5L931.5 668.5M847.5 637.5L847.5 654.5M874.5 637.5L874.5 683.3M898.5 637.5L898.5 683.3M920.5 637.5L920.5 654.5M898.5 654.5L909.3 637.5M909.5 654.5L920.5 637.5M909.5 637.5L909.5 654.5"/>
<g stroke-width="0.45" text-rendering="geometricPrecision" style="opacity:0.999">
<text x="72.3" y="12" fill="#ffffff" font-size="19.5" text-anchor="middle" textLength="33.5" lengthAdjust="spacingAndGlyphs" transform="rotate(180 72.3 12)" dominant-baseline="central">L764</text>
<text x="242" y="30.8" fill="#0000ff" stroke="#0000ff" font-size="9.5" text-anchor="middle" textLength="11" lengthAdjust="spacingAndGlyphs">310</text>
<text x="295" y="49" fill="#0000ff" stroke="#0000ff" font-size="10.5" text-anchor="middle" textLength="21" lengthAdjust="spacingAndGlyphs">140h11</text>
<text x="431.5" y="218.5" fill="#0000ff" stroke="#0000ff" font-size="10.5" text-anchor="middle" textLength="21" lengthAdjust="spacingAndGlyphs" transform="rotate(-90 431.5 218.5)">140h11</text>
<text x="455" y="271" fill="#0000ff" stroke="#0000ff" font-size="9.5" text-anchor="middle" textLength="11" lengthAdjust="spacingAndGlyphs" transform="rotate(-90 455 271)">310</text>
<text x="152.8" y="24" fill="#0000ff" stroke="#0000ff" font-size="13" text-anchor="middle" textLength="12" lengthAdjust="spacingAndGlyphs">24</text>
<text x="201.8" y="24" fill="#0000ff" stroke="#0000ff" font-size="13" text-anchor="middle" textLength="12" lengthAdjust="spacingAndGlyphs">23</text>
<text x="37" y="63" fill="#0000ff" stroke="#0000ff" font-size="13" text-anchor="middle" textLength="12" lengthAdjust="spacingAndGlyphs">25</text>
<text x="36" y="82.5" fill="#0000ff" stroke="#0000ff" font-size="13" text-anchor="middle" textLength="9.6" lengthAdjust="spacingAndGlyphs">19</text>
<text x="36.5" y="96" fill="#0000ff" stroke="#0000ff" font-size="13" text-anchor="middle" textLength="12" lengthAdjust="spacingAndGlyphs">20</text>
<text x="36.5" y="108.5" fill="#0000ff" stroke="#0000ff" font-size="13" text-anchor="middle" textLength="12" lengthAdjust="spacingAndGlyphs">21</text>
<text x="37" y="135" fill="#0000ff" stroke="#0000ff" font-size="13" text-anchor="middle" textLength="12" lengthAdjust="spacingAndGlyphs">22</text>
<text x="417.5" y="417" fill="#0000ff" stroke="#0000ff" font-size="8" textLength="4.5" lengthAdjust="spacingAndGlyphs">6</text>
<text x="717.5" y="46.8" fill="#0000ff" stroke="#0000ff" font-size="9.5" text-anchor="middle" textLength="17" lengthAdjust="spacingAndGlyphs">213.5</text>
<text x="849.5" y="46.8" fill="#0000ff" stroke="#0000ff" font-size="9.5" text-anchor="middle" textLength="17" lengthAdjust="spacingAndGlyphs">213.5</text>
<text x="786.5" y="67" fill="#0000ff" stroke="#0000ff" font-size="9" textLength="4" lengthAdjust="spacingAndGlyphs">B</text>
<text x="786.5" y="81.5" fill="#0000ff" stroke="#0000ff" font-size="9" textLength="4" lengthAdjust="spacingAndGlyphs">b</text>
<text x="697" y="153.5" fill="#0000ff" stroke="#0000ff" font-size="10" text-anchor="middle" textLength="16" lengthAdjust="spacingAndGlyphs">50H9</text>
<text x="871" y="153.5" fill="#0000ff" stroke="#0000ff" font-size="10" text-anchor="middle" textLength="16" lengthAdjust="spacingAndGlyphs">50H9</text>
<text x="784" y="154.8" fill="#0000ff" stroke="#0000ff" font-size="9.5" text-anchor="middle" textLength="12" lengthAdjust="spacingAndGlyphs">230</text>
<text x="519" y="262.5" fill="#0000ff" stroke="#0000ff" font-size="9.5" text-anchor="middle" textLength="20" lengthAdjust="spacingAndGlyphs" transform="rotate(-90 519 262.5)">Ø75s6</text>
<text x="627" y="264.5" fill="#0000ff" stroke="#0000ff" font-size="9.5" text-anchor="middle" textLength="13" lengthAdjust="spacingAndGlyphs" transform="rotate(-90 627 264.5)">Ø85</text>
<text x="621.5" y="252" fill="#0000ff" stroke="#0000ff" font-size="5.5" text-anchor="middle" textLength="9" lengthAdjust="spacingAndGlyphs" transform="rotate(-90 621.5 252)">+0.05</text>
<text x="627" y="252" fill="#0000ff" stroke="#0000ff" font-size="5.5" text-anchor="middle" textLength="9" lengthAdjust="spacingAndGlyphs" transform="rotate(-90 627 252)">+0.03</text>
<text x="723.5" y="262.8" fill="#0000ff" stroke="#0000ff" font-size="9.5" text-anchor="middle" textLength="22" lengthAdjust="spacingAndGlyphs" transform="rotate(-90 723.5 262.8)">Ø100m6</text>
<text x="860.5" y="262.5" fill="#0000ff" stroke="#0000ff" font-size="9.5" text-anchor="middle" textLength="22" lengthAdjust="spacingAndGlyphs" transform="rotate(-90 860.5 262.5)">Ø100m6</text>
<text x="774.5" y="264" fill="#0000ff" stroke="#0000ff" font-size="9.5" text-anchor="middle" textLength="15" lengthAdjust="spacingAndGlyphs" transform="rotate(-90 774.5 264)">Ø120</text>
<text x="769" y="249" fill="#0000ff" stroke="#0000ff" font-size="6" text-anchor="middle" textLength="6.5" lengthAdjust="spacingAndGlyphs" transform="rotate(-90 769 249)">S7</text>
<text x="775" y="249" fill="#0000ff" stroke="#0000ff" font-size="6" text-anchor="middle" textLength="6.5" lengthAdjust="spacingAndGlyphs" transform="rotate(-90 775 249)">h6</text>
<text x="941" y="263" fill="#0000ff" stroke="#0000ff" font-size="9.5" text-anchor="middle" textLength="26" lengthAdjust="spacingAndGlyphs" transform="rotate(-90 941 263)">Ø500h9</text>
<text x="955.5" y="262.4" fill="#0000ff" stroke="#0000ff" font-size="9.5" text-anchor="middle" textLength="17" lengthAdjust="spacingAndGlyphs" transform="rotate(-90 955.5 262.4)">Ø540</text>
<text x="972.5" y="166" fill="#0000ff" stroke="#0000ff" font-size="9.5" text-anchor="middle" textLength="13" lengthAdjust="spacingAndGlyphs" transform="rotate(-90 972.5 166)">435</text>
<text x="568.5" y="315" fill="#0000ff" stroke="#0000ff" font-size="9.5" text-anchor="middle" textLength="11" lengthAdjust="spacingAndGlyphs">105</text>
<text x="660" y="459.3" fill="#0000ff" stroke="#0000ff" font-size="9.5" text-anchor="middle" textLength="12" lengthAdjust="spacingAndGlyphs">400</text>
<text x="854" y="459.3" fill="#0000ff" stroke="#0000ff" font-size="9.5" text-anchor="middle" textLength="12" lengthAdjust="spacingAndGlyphs">230</text>
<text x="799" y="445.6" fill="#0000ff" stroke="#0000ff" font-size="9.5" text-anchor="middle" textLength="12" lengthAdjust="spacingAndGlyphs">280</text>
<text x="1003.5" y="30.8" fill="#0000ff" stroke="#0000ff" font-size="13" text-anchor="middle" textLength="3.6" lengthAdjust="spacingAndGlyphs">1</text>
<text x="1003.5" y="75.8" fill="#0000ff" stroke="#0000ff" font-size="13" text-anchor="middle" textLength="6" lengthAdjust="spacingAndGlyphs">2</text>
<text x="1003.5" y="131.8" fill="#0000ff" stroke="#0000ff" font-size="13" text-anchor="middle" textLength="6" lengthAdjust="spacingAndGlyphs">3</text>
<text x="1003.5" y="182.8" fill="#0000ff" stroke="#0000ff" font-size="13" text-anchor="middle" textLength="6" lengthAdjust="spacingAndGlyphs">4</text>
<text x="1003.5" y="248.8" fill="#0000ff" stroke="#0000ff" font-size="13" text-anchor="middle" textLength="6" lengthAdjust="spacingAndGlyphs">5</text>
<text x="1003.5" y="261.8" fill="#0000ff" stroke="#0000ff" font-size="13" text-anchor="middle" textLength="6" lengthAdjust="spacingAndGlyphs">6</text>
<text x="1003.5" y="302.8" fill="#0000ff" stroke="#0000ff" font-size="13" text-anchor="middle" textLength="6" lengthAdjust="spacingAndGlyphs">7</text>
<text x="1004.5" y="330.8" fill="#0000ff" stroke="#0000ff" font-size="13" text-anchor="middle" textLength="6" lengthAdjust="spacingAndGlyphs">8</text>
<text x="1003.5" y="361.8" fill="#0000ff" stroke="#0000ff" font-size="13" text-anchor="middle" textLength="6" lengthAdjust="spacingAndGlyphs">9</text>
<text x="1002.9" y="384.8" fill="#0000ff" stroke="#0000ff" font-size="13" text-anchor="middle" textLength="9.6" lengthAdjust="spacingAndGlyphs">10</text>
<text x="492.4" y="177.8" fill="#0000ff" stroke="#0000ff" font-size="13" text-anchor="middle" textLength="9.6" lengthAdjust="spacingAndGlyphs">18</text>
<text x="491.1" y="214.8" fill="#0000ff" stroke="#0000ff" font-size="13" text-anchor="middle" textLength="9.6" lengthAdjust="spacingAndGlyphs">17</text>
<text x="488.2" y="348.8" fill="#0000ff" stroke="#0000ff" font-size="13" text-anchor="middle" textLength="9.6" lengthAdjust="spacingAndGlyphs">16</text>
<text x="488.2" y="387.8" fill="#0000ff" stroke="#0000ff" font-size="13" text-anchor="middle" textLength="9.6" lengthAdjust="spacingAndGlyphs">15</text>
<text x="489.1" y="423.8" fill="#0000ff" stroke="#0000ff" font-size="13" text-anchor="middle" textLength="9.6" lengthAdjust="spacingAndGlyphs">14</text>
<text x="489.1" y="437.8" fill="#0000ff" stroke="#0000ff" font-size="13" text-anchor="middle" textLength="9.6" lengthAdjust="spacingAndGlyphs">13</text>
<text x="489.1" y="450.8" fill="#0000ff" stroke="#0000ff" font-size="13" text-anchor="middle" textLength="9.6" lengthAdjust="spacingAndGlyphs">12</text>
<text x="490.4" y="483.8" fill="#0000ff" stroke="#0000ff" font-size="13" text-anchor="middle" textLength="7.2" lengthAdjust="spacingAndGlyphs">11</text>
<text x="678" y="70" fill="#0000ff" stroke="#0000ff" font-size="8" textLength="3.5" lengthAdjust="spacingAndGlyphs">4</text>
<text x="697.5" y="74.6" fill="#0000ff" stroke="#0000ff" font-size="8" textLength="4.5" lengthAdjust="spacingAndGlyphs">2</text>
<text x="55.2" y="556.1" fill="#00ff00" stroke="#00ff00" font-size="10.5" textLength="18" lengthAdjust="spacingAndGlyphs">QU100</text>
<text x="140.2" y="555.3" fill="#00ff00" stroke="#00ff00" font-size="11" textLength="17.6" lengthAdjust="spacingAndGlyphs">QL47</text>
<text x="165.6" y="556.1" fill="#00ff00" stroke="#00ff00" font-size="10.5" textLength="11.4" lengthAdjust="spacingAndGlyphs">180</text>
<text x="189.9" y="556.1" fill="#00ff00" stroke="#00ff00" font-size="10.5" textLength="11.4" lengthAdjust="spacingAndGlyphs">130</text>
<text x="211.7" y="556.1" fill="#00ff00" stroke="#00ff00" font-size="10.5" textLength="11.4" lengthAdjust="spacingAndGlyphs">153</text>
<text x="240.2" y="556.1" fill="#00ff00" stroke="#00ff00" font-size="10.5" textLength="13.2" lengthAdjust="spacingAndGlyphs">294</text>
<text x="51.5" y="569.1" fill="#00ff00" stroke="#00ff00" font-size="10.5" textLength="37.8" lengthAdjust="spacingAndGlyphs"><tspan font-size="8.4">方</tspan>? 100x100</text>
<text x="140.2" y="568.3" fill="#00ff00" stroke="#00ff00" font-size="11" textLength="17.6" lengthAdjust="spacingAndGlyphs">QL46</text>
<text x="165.6" y="569.1" fill="#00ff00" stroke="#00ff00" font-size="10.5" textLength="11.4" lengthAdjust="spacingAndGlyphs">180</text>
<text x="189.9" y="569.1" fill="#00ff00" stroke="#00ff00" font-size="10.5" textLength="11.4" lengthAdjust="spacingAndGlyphs">130</text>
<text x="211.7" y="569.1" fill="#00ff00" stroke="#00ff00" font-size="10.5" textLength="11.4" lengthAdjust="spacingAndGlyphs">153</text>
<text x="240.2" y="569.1" fill="#00ff00" stroke="#00ff00" font-size="10.5" textLength="13.2" lengthAdjust="spacingAndGlyphs">293</text>
<text x="51.5" y="582.1" fill="#00ff00" stroke="#00ff00" font-size="10.5" textLength="33.8" lengthAdjust="spacingAndGlyphs"><tspan font-size="8.4">方</tspan>?  90x90</text>
<text x="140.2" y="581.3" fill="#00ff00" stroke="#00ff00" font-size="11" textLength="17.6" lengthAdjust="spacingAndGlyphs">QL22</text>
<text x="165.6" y="582.1" fill="#00ff00" stroke="#00ff00" font-size="10.5" textLength="11.4" lengthAdjust="spacingAndGlyphs">170</text>
<text x="189.9" y="582.1" fill="#00ff00" stroke="#00ff00" font-size="10.5" textLength="11.4" lengthAdjust="spacingAndGlyphs">120</text>
<text x="211.7" y="582.1" fill="#00ff00" stroke="#00ff00" font-size="10.5" textLength="11.4" lengthAdjust="spacingAndGlyphs">148</text>
<text x="240.2" y="582.1" fill="#00ff00" stroke="#00ff00" font-size="10.5" textLength="13.2" lengthAdjust="spacingAndGlyphs">288</text>
<text x="51.5" y="595.1" fill="#00ff00" stroke="#00ff00" font-size="10.5" textLength="33.8" lengthAdjust="spacingAndGlyphs"><tspan font-size="8.4">方</tspan>?  80x80</text>
<text x="140.2" y="594.3" fill="#00ff00" stroke="#00ff00" font-size="11" textLength="17.6" lengthAdjust="spacingAndGlyphs">QL21</text>
<text x="165.6" y="595.1" fill="#00ff00" stroke="#00ff00" font-size="10.5" textLength="11.4" lengthAdjust="spacingAndGlyphs">160</text>
<text x="189.9" y="595.1" fill="#00ff00" stroke="#00ff00" font-size="10.5" textLength="11.4" lengthAdjust="spacingAndGlyphs">110</text>
<text x="211.7" y="595.1" fill="#00ff00" stroke="#00ff00" font-size="10.5" textLength="11.4" lengthAdjust="spacingAndGlyphs">144</text>
<text x="240.2" y="595.1" fill="#00ff00" stroke="#00ff00" font-size="10.5" textLength="13.2" lengthAdjust="spacingAndGlyphs">284</text>
<text x="51.5" y="608.1" fill="#00ff00" stroke="#00ff00" font-size="10.5" textLength="33.8" lengthAdjust="spacingAndGlyphs"><tspan font-size="8.4">方</tspan>?  70x70</text>
<text x="140.2" y="607.3" fill="#00ff00" stroke="#00ff00" font-size="11" textLength="17.6" lengthAdjust="spacingAndGlyphs">QL20</text>
<text x="165.6" y="608.1" fill="#00ff00" stroke="#00ff00" font-size="10.5" textLength="11.4" lengthAdjust="spacingAndGlyphs">150</text>
<text x="189.9" y="608.1" fill="#00ff00" stroke="#00ff00" font-size="10.5" textLength="11.4" lengthAdjust="spacingAndGlyphs">100</text>
<text x="211.7" y="608.1" fill="#00ff00" stroke="#00ff00" font-size="10.5" textLength="11.4" lengthAdjust="spacingAndGlyphs">139</text>
<text x="240.2" y="608.1" fill="#00ff00" stroke="#00ff00" font-size="10.5" textLength="13.2" lengthAdjust="spacingAndGlyphs">279</text>
<text x="51.5" y="621.1" fill="#00ff00" stroke="#00ff00" font-size="10.5" textLength="55.1" lengthAdjust="spacingAndGlyphs"><tspan font-size="8.4">方</tspan>?  50x50 60x60</text>
<text x="140.2" y="620.3" fill="#00ff00" stroke="#00ff00" font-size="11" textLength="17.6" lengthAdjust="spacingAndGlyphs">QL19</text>
<text x="165.6" y="621.1" fill="#00ff00" stroke="#00ff00" font-size="10.5" textLength="11.4" lengthAdjust="spacingAndGlyphs">130</text>
<text x="189.9" y="621.1" fill="#00ff00" stroke="#00ff00" font-size="10.5" textLength="7.6" lengthAdjust="spacingAndGlyphs">80</text>
<text x="211.7" y="621.1" fill="#00ff00" stroke="#00ff00" font-size="10.5" textLength="11.4" lengthAdjust="spacingAndGlyphs">131</text>
<text x="240.2" y="621.1" fill="#00ff00" stroke="#00ff00" font-size="10.5" textLength="13.2" lengthAdjust="spacingAndGlyphs">271</text>
<text x="55.2" y="634.1" fill="#00ff00" stroke="#00ff00" font-size="10.5" textLength="14.4" lengthAdjust="spacingAndGlyphs">QU80</text>
<text x="140.2" y="633.3" fill="#00ff00" stroke="#00ff00" font-size="11" textLength="17.6" lengthAdjust="spacingAndGlyphs">QL32</text>
<text x="165.6" y="634.1" fill="#00ff00" stroke="#00ff00" font-size="10.5" textLength="11.4" lengthAdjust="spacingAndGlyphs">170</text>
<text x="189.9" y="634.1" fill="#00ff00" stroke="#00ff00" font-size="10.5" textLength="11.4" lengthAdjust="spacingAndGlyphs">120</text>
<text x="211.7" y="634.1" fill="#00ff00" stroke="#00ff00" font-size="10.5" textLength="11.4" lengthAdjust="spacingAndGlyphs">148</text>
<text x="240.2" y="634.1" fill="#00ff00" stroke="#00ff00" font-size="10.5" textLength="13.2" lengthAdjust="spacingAndGlyphs">288</text>
<text x="54" y="647.1" fill="#00ff00" stroke="#00ff00" font-size="10.5" textLength="68" lengthAdjust="spacingAndGlyphs">38,43,50kg/m QU70</text>
<text x="140.2" y="646.3" fill="#00ff00" stroke="#00ff00" font-size="11" textLength="17.6" lengthAdjust="spacingAndGlyphs">QL30</text>
<text x="165.6" y="647.1" fill="#00ff00" stroke="#00ff00" font-size="10.5" textLength="11.4" lengthAdjust="spacingAndGlyphs">150</text>
<text x="189.9" y="647.1" fill="#00ff00" stroke="#00ff00" font-size="10.5" textLength="11.4" lengthAdjust="spacingAndGlyphs">100</text>
<text x="211.7" y="647.1" fill="#00ff00" stroke="#00ff00" font-size="10.5" textLength="11.4" lengthAdjust="spacingAndGlyphs">129</text>
<text x="240.2" y="647.1" fill="#00ff00" stroke="#00ff00" font-size="10.5" textLength="13.2" lengthAdjust="spacingAndGlyphs">279</text>
<text x="54" y="660.1" fill="#00ff00" stroke="#00ff00" font-size="10.5" textLength="54.8" lengthAdjust="spacingAndGlyphs">24kg/m 33kg/m</text>
<text x="140.2" y="659.3" fill="#00ff00" stroke="#00ff00" font-size="11" textLength="17.6" lengthAdjust="spacingAndGlyphs">QL45</text>
<text x="165.6" y="660.1" fill="#00ff00" stroke="#00ff00" font-size="10.5" textLength="11.4" lengthAdjust="spacingAndGlyphs">140</text>
<text x="189.9" y="660.1" fill="#00ff00" stroke="#00ff00" font-size="10.5" textLength="7.6" lengthAdjust="spacingAndGlyphs">90</text>
<text x="211.7" y="660.1" fill="#00ff00" stroke="#00ff00" font-size="10.5" textLength="11.4" lengthAdjust="spacingAndGlyphs">135</text>
<text x="240.2" y="660.1" fill="#00ff00" stroke="#00ff00" font-size="10.5" textLength="13.2" lengthAdjust="spacingAndGlyphs">275</text>
<text x="54" y="673.1" fill="#00ff00" stroke="#00ff00" font-size="10.5" textLength="17" lengthAdjust="spacingAndGlyphs">QU80</text>
<text x="140.2" y="672.3" fill="#00ff00" stroke="#00ff00" font-size="11" textLength="17.6" lengthAdjust="spacingAndGlyphs">QL27</text>
<text x="165.6" y="673.1" fill="#00ff00" stroke="#00ff00" font-size="10.5" textLength="11.4" lengthAdjust="spacingAndGlyphs">170</text>
<text x="189.9" y="673.1" fill="#00ff00" stroke="#00ff00" font-size="10.5" textLength="11.4" lengthAdjust="spacingAndGlyphs">120</text>
<text x="211.7" y="673.1" fill="#00ff00" stroke="#00ff00" font-size="10.5" textLength="11.4" lengthAdjust="spacingAndGlyphs">148</text>
<text x="240.2" y="673.1" fill="#00ff00" stroke="#00ff00" font-size="10.5" textLength="13.2" lengthAdjust="spacingAndGlyphs">288</text>
<text x="54" y="686.1" fill="#00ff00" stroke="#00ff00" font-size="10.5" textLength="68" lengthAdjust="spacingAndGlyphs">38,43,50kg/m QU70</text>
<text x="140.2" y="685.3" fill="#00ff00" stroke="#00ff00" font-size="11" textLength="17.6" lengthAdjust="spacingAndGlyphs">QL26</text>
<text x="165.6" y="686.1" fill="#00ff00" stroke="#00ff00" font-size="10.5" textLength="11.4" lengthAdjust="spacingAndGlyphs">160</text>
<text x="189.9" y="686.1" fill="#00ff00" stroke="#00ff00" font-size="10.5" textLength="11.4" lengthAdjust="spacingAndGlyphs">110</text>
<text x="211.7" y="686.1" fill="#00ff00" stroke="#00ff00" font-size="10.5" textLength="11.4" lengthAdjust="spacingAndGlyphs">144</text>
<text x="240.2" y="686.1" fill="#00ff00" stroke="#00ff00" font-size="10.5" textLength="13.2" lengthAdjust="spacingAndGlyphs">284</text>
<text x="54" y="699.1" fill="#00ff00" stroke="#00ff00" font-size="10.5" textLength="54.8" lengthAdjust="spacingAndGlyphs">24kg/m 33kg/m</text>
<text x="140.2" y="698.3" fill="#00ff00" stroke="#00ff00" font-size="11" textLength="17.6" lengthAdjust="spacingAndGlyphs">QL44</text>
<text x="165.6" y="699.1" fill="#00ff00" stroke="#00ff00" font-size="10.5" textLength="11.4" lengthAdjust="spacingAndGlyphs">140</text>
<text x="189.9" y="699.1" fill="#00ff00" stroke="#00ff00" font-size="10.5" textLength="7.6" lengthAdjust="spacingAndGlyphs">90</text>
<text x="211.7" y="699.1" fill="#00ff00" stroke="#00ff00" font-size="10.5" textLength="11.4" lengthAdjust="spacingAndGlyphs">135</text>
<text x="240.2" y="699.1" fill="#00ff00" stroke="#00ff00" font-size="10.5" textLength="13.2" lengthAdjust="spacingAndGlyphs">275</text>
<text x="140.5" y="712.1" fill="#00ff00" stroke="#00ff00" font-size="10.5" textLength="9" lengthAdjust="spacingAndGlyphs">??</text>
<text x="167.5" y="712.1" fill="#00ff00" stroke="#00ff00" font-size="10.5" textLength="9.6" lengthAdjust="spacingAndGlyphs">???</text>
<text x="190.4" y="712.1" fill="#00ff00" stroke="#00ff00" font-size="10.5" textLength="8.6" lengthAdjust="spacingAndGlyphs"><tspan font-size="8.4">轮</tspan>?</text>
<text x="208.7" y="712.1" fill="#00ff00" stroke="#00ff00" font-size="10.5" textLength="13.3" lengthAdjust="spacingAndGlyphs">???<tspan font-size="8.4">量</tspan></text>
<text x="234.9" y="712.1" fill="#00ff00" stroke="#00ff00" font-size="10.5" textLength="17.9" lengthAdjust="spacingAndGlyphs">????<tspan font-size="8.4">量</tspan></text>
<text x="141.3" y="724.1" fill="#00ff00" stroke="#00ff00" font-size="10.5" textLength="14.2" lengthAdjust="spacingAndGlyphs"><tspan font-size="8.4">加工号</tspan></text>
<text x="170" y="724.1" fill="#00ff00" stroke="#00ff00" font-size="10.5" textLength="6" lengthAdjust="spacingAndGlyphs">B</text>
<text x="193" y="724.1" fill="#00ff00" stroke="#00ff00" font-size="10.5" textLength="4.7" lengthAdjust="spacingAndGlyphs">b</text>
<text x="213.3" y="724.1" fill="#00ff00" stroke="#00ff00" font-size="10.5" textLength="8.2" lengthAdjust="spacingAndGlyphs">kg</text>
<text x="241" y="724.1" fill="#00ff00" stroke="#00ff00" font-size="10.5" textLength="8.2" lengthAdjust="spacingAndGlyphs">kg</text>
<text x="69" y="720" fill="#00ff00" stroke="#00ff00" font-size="10.5" textLength="17.2" lengthAdjust="spacingAndGlyphs"><tspan font-size="8.4">使用</tspan>??</text>
<text x="267" y="556.6" fill="#0000ff" stroke="#0000ff" font-size="10.5" textLength="22.4" lengthAdjust="spacingAndGlyphs">??<tspan font-size="8.4">形踏面</tspan></text>
<text x="267.5" y="622" fill="#0000ff" stroke="#0000ff" font-size="10.5" textLength="22.2" lengthAdjust="spacingAndGlyphs">?<tspan font-size="8.4">柱形踏面</tspan></text>
<text x="267" y="687.2" fill="#0000ff" stroke="#0000ff" font-size="10.5" textLength="20.3" lengthAdjust="spacingAndGlyphs">??<tspan font-size="8.4">踏面</tspan></text>
<text x="270.6" y="719.2" fill="#0000ff" stroke="#0000ff" font-size="10.5" textLength="8.6" lengthAdjust="spacingAndGlyphs">?<tspan font-size="8.4">注</tspan></text>
<text x="94.7" y="742.5" fill="#0000ff" stroke="#0000ff" font-size="13" textLength="59.5" lengthAdjust="spacingAndGlyphs">???<tspan font-size="10.4">度及</tspan>???<tspan font-size="10.4">量表</tspan></text>
<text x="89" y="533" fill="#0000ff" stroke="#0000ff" font-size="12.5" textLength="148.5" lengthAdjust="spacingAndGlyphs">?????<tspan font-size="10">形踏面</tspan>?,?<tspan font-size="10">端直径大的一端</tspan>???<tspan font-size="10">出</tspan>??.</text>
<text x="137" y="500.3" fill="#ffffff" font-size="13.8" textLength="38.5" lengthAdjust="spacingAndGlyphs">技?要求</text>
<text x="383" y="535.2" fill="#00ff00" stroke="#00ff00" font-size="10.5" text-anchor="middle" textLength="8.6" lengthAdjust="spacingAndGlyphs">25</text>
<text x="398.8" y="535.2" fill="#00ff00" stroke="#00ff00" font-size="10.5" textLength="30.1" lengthAdjust="spacingAndGlyphs">L764-93</text>
<text x="459.9" y="535.2" fill="#00ff00" stroke="#00ff00" font-size="10.5" textLength="51" lengthAdjust="spacingAndGlyphs">??<tspan font-size="8.4">链</tspan>14X3-350</text>
<text x="560" y="535.2" fill="#00ff00" stroke="#00ff00" font-size="10.5" text-anchor="middle" textLength="26.4" lengthAdjust="spacingAndGlyphs">Q235-B</text>
<text x="592.5" y="535.2" fill="#00ff00" stroke="#00ff00" font-size="10.5" text-anchor="middle" textLength="4.3" lengthAdjust="spacingAndGlyphs">2</text>
<text x="605.3" y="535.2" fill="#00ff00" stroke="#00ff00" font-size="10.5" textLength="13.8" lengthAdjust="spacingAndGlyphs">0.28</text>
<text x="627.3" y="535.2" fill="#00ff00" stroke="#00ff00" font-size="10.5" textLength="13.8" lengthAdjust="spacingAndGlyphs">0.56</text>
<text x="383" y="548.2" fill="#00ff00" stroke="#00ff00" font-size="10.5" text-anchor="middle" textLength="8.6" lengthAdjust="spacingAndGlyphs">24</text>
<text x="398.8" y="548.2" fill="#00ff00" stroke="#00ff00" font-size="10.5" textLength="30.1" lengthAdjust="spacingAndGlyphs">L764-92</text>
<text x="459.9" y="548.2" fill="#00ff00" stroke="#00ff00" font-size="10.5" textLength="11.4" lengthAdjust="spacingAndGlyphs">?<tspan font-size="8.4">板</tspan></text>
<text x="560" y="548.2" fill="#00ff00" stroke="#00ff00" font-size="10.5" text-anchor="middle" textLength="33.2" lengthAdjust="spacingAndGlyphs">Q235-B.F</text>
<text x="592.5" y="548.2" fill="#00ff00" stroke="#00ff00" font-size="10.5" text-anchor="middle" textLength="4.3" lengthAdjust="spacingAndGlyphs">2</text>
<text x="605.3" y="548.2" fill="#00ff00" stroke="#00ff00" font-size="10.5" textLength="17.7" lengthAdjust="spacingAndGlyphs">0.034</text>
<text x="627.3" y="548.2" fill="#00ff00" stroke="#00ff00" font-size="10.5" textLength="17.7" lengthAdjust="spacingAndGlyphs">0.068</text>
<text x="383" y="561.1" fill="#00ff00" stroke="#00ff00" font-size="10.5" text-anchor="middle" textLength="8.6" lengthAdjust="spacingAndGlyphs">23</text>
<text x="398.8" y="561.1" fill="#00ff00" stroke="#00ff00" font-size="10.5" textLength="38.7" lengthAdjust="spacingAndGlyphs">GB1152-79</text>
<text x="459.9" y="561.1" fill="#00ff00" stroke="#00ff00" font-size="10.5" textLength="36.1" lengthAdjust="spacingAndGlyphs"><tspan font-size="8.4">油杯</tspan>M10X1</text>
<text x="560" y="561.1" fill="#00ff00" stroke="#00ff00" font-size="10.5" text-anchor="middle" textLength="14.1" lengthAdjust="spacingAndGlyphs"><tspan font-size="8.4">成品</tspan></text>
<text x="592.5" y="561.1" fill="#00ff00" stroke="#00ff00" font-size="10.5" text-anchor="middle" textLength="4.3" lengthAdjust="spacingAndGlyphs">2</text>
<text x="605.3" y="561.1" fill="#00ff00" stroke="#00ff00" font-size="10.5" textLength="17.7" lengthAdjust="spacingAndGlyphs">0.031</text>
<text x="627.3" y="561.1" fill="#00ff00" stroke="#00ff00" font-size="10.5" textLength="17.7" lengthAdjust="spacingAndGlyphs">0.062</text>
<text x="383" y="574.1" fill="#00ff00" stroke="#00ff00" font-size="10.5" text-anchor="middle" textLength="8.6" lengthAdjust="spacingAndGlyphs">22</text>
<text x="398.8" y="574.1" fill="#00ff00" stroke="#00ff00" font-size="10.5" textLength="30.1" lengthAdjust="spacingAndGlyphs">L764-91</text>
<text x="459.9" y="574.1" fill="#00ff00" stroke="#00ff00" font-size="10.5" textLength="11.4" lengthAdjust="spacingAndGlyphs">?<tspan font-size="8.4">板</tspan></text>
<text x="560" y="574.1" fill="#00ff00" stroke="#00ff00" font-size="10.5" text-anchor="middle" textLength="33.2" lengthAdjust="spacingAndGlyphs">Q235-B.F</text>
<text x="592.5" y="574.1" fill="#00ff00" stroke="#00ff00" font-size="10.5" text-anchor="middle" textLength="4.3" lengthAdjust="spacingAndGlyphs">4</text>
<text x="605.3" y="574.1" fill="#00ff00" stroke="#00ff00" font-size="10.5" textLength="17.7" lengthAdjust="spacingAndGlyphs">0.412</text>
<text x="627.3" y="574.1" fill="#00ff00" stroke="#00ff00" font-size="10.5" textLength="13.8" lengthAdjust="spacingAndGlyphs">1.65</text>
<text x="383" y="587" fill="#00ff00" stroke="#00ff00" font-size="10.5" text-anchor="middle" textLength="8.6" lengthAdjust="spacingAndGlyphs">21</text>
<text x="398.8" y="587" fill="#00ff00" stroke="#00ff00" font-size="10.5" textLength="30.1" lengthAdjust="spacingAndGlyphs">GB93-87</text>
<text x="459.9" y="587" fill="#00ff00" stroke="#00ff00" font-size="10.5" textLength="17.6" lengthAdjust="spacingAndGlyphs">??24</text>
<text x="560" y="587" fill="#00ff00" stroke="#00ff00" font-size="10.5" text-anchor="middle" textLength="17.6" lengthAdjust="spacingAndGlyphs">65Mn</text>
<text x="592.5" y="587" fill="#00ff00" stroke="#00ff00" font-size="10.5" text-anchor="middle" textLength="4.3" lengthAdjust="spacingAndGlyphs">4</text>
<text x="605.3" y="587" fill="#00ff00" stroke="#00ff00" font-size="10.5" textLength="17.7" lengthAdjust="spacingAndGlyphs">0.027</text>
<text x="627.3" y="587" fill="#00ff00" stroke="#00ff00" font-size="10.5" textLength="17.7" lengthAdjust="spacingAndGlyphs">0.108</text>
<text x="383" y="599.9" fill="#00ff00" stroke="#00ff00" font-size="10.5" text-anchor="middle" textLength="8.6" lengthAdjust="spacingAndGlyphs">20</text>
<text x="398.8" y="599.9" fill="#00ff00" stroke="#00ff00" font-size="10.5" textLength="38.7" lengthAdjust="spacingAndGlyphs">GB6170-86</text>
<text x="459.9" y="599.9" fill="#00ff00" stroke="#00ff00" font-size="10.5" textLength="27.3" lengthAdjust="spacingAndGlyphs"><tspan font-size="8.4">螺母</tspan>M24</text>
<text x="560" y="599.9" fill="#00ff00" stroke="#00ff00" font-size="10.5" text-anchor="middle" textLength="8.8" lengthAdjust="spacingAndGlyphs">8?</text>
<text x="592.5" y="599.9" fill="#00ff00" stroke="#00ff00" font-size="10.5" text-anchor="middle" textLength="4.3" lengthAdjust="spacingAndGlyphs">4</text>
<text x="605.3" y="599.9" fill="#00ff00" stroke="#00ff00" font-size="10.5" textLength="17.7" lengthAdjust="spacingAndGlyphs">0.103</text>
<text x="627.3" y="599.9" fill="#00ff00" stroke="#00ff00" font-size="10.5" textLength="17.7" lengthAdjust="spacingAndGlyphs">0.412</text>
<text x="383" y="612.9" fill="#00ff00" stroke="#00ff00" font-size="10.5" text-anchor="middle" textLength="8.6" lengthAdjust="spacingAndGlyphs">19</text>
<text x="398.8" y="612.9" fill="#00ff00" stroke="#00ff00" font-size="10.5" textLength="38.7" lengthAdjust="spacingAndGlyphs">GB5782-86</text>
<text x="459.9" y="612.9" fill="#00ff00" stroke="#00ff00" font-size="10.5" textLength="42.2" lengthAdjust="spacingAndGlyphs"><tspan font-size="8.4">螺</tspan>?M24X130</text>
<text x="560" y="612.9" fill="#00ff00" stroke="#00ff00" font-size="10.5" text-anchor="middle" textLength="15.6" lengthAdjust="spacingAndGlyphs">8.8?</text>
<text x="592.5" y="612.9" fill="#00ff00" stroke="#00ff00" font-size="10.5" text-anchor="middle" textLength="4.3" lengthAdjust="spacingAndGlyphs">4</text>
<text x="605.3" y="612.9" fill="#00ff00" stroke="#00ff00" font-size="10.5" textLength="17.7" lengthAdjust="spacingAndGlyphs">0.567</text>
<text x="627.3" y="612.9" fill="#00ff00" stroke="#00ff00" font-size="10.5" textLength="17.7" lengthAdjust="spacingAndGlyphs">2.268</text>
<text x="383" y="625.8" fill="#00ff00" stroke="#00ff00" font-size="10.5" text-anchor="middle" textLength="8.6" lengthAdjust="spacingAndGlyphs">18</text>
<text x="398.8" y="625.8" fill="#00ff00" stroke="#00ff00" font-size="10.5" textLength="30.1" lengthAdjust="spacingAndGlyphs">L764-64</text>
<text x="459.9" y="625.8" fill="#00ff00" stroke="#00ff00" font-size="10.5" textLength="15.8" lengthAdjust="spacingAndGlyphs">?<tspan font-size="8.4">圈</tspan>?</text>
<text x="560" y="625.8" fill="#00ff00" stroke="#00ff00" font-size="10.5" text-anchor="middle" textLength="33.2" lengthAdjust="spacingAndGlyphs">Q235-B.F</text>
<text x="592.5" y="625.8" fill="#00ff00" stroke="#00ff00" font-size="10.5" text-anchor="middle" textLength="4.3" lengthAdjust="spacingAndGlyphs">2</text>
<text x="605.3" y="625.8" fill="#00ff00" stroke="#00ff00" font-size="10.5" textLength="9.9" lengthAdjust="spacingAndGlyphs">0.3</text>
<text x="627.3" y="625.8" fill="#00ff00" stroke="#00ff00" font-size="10.5" textLength="9.9" lengthAdjust="spacingAndGlyphs">0.6</text>
<text x="383" y="638.8" fill="#00ff00" stroke="#00ff00" font-size="10.5" text-anchor="middle" textLength="8.6" lengthAdjust="spacingAndGlyphs">17</text>
<text x="398.8" y="638.8" fill="#00ff00" stroke="#00ff00" font-size="10.5" textLength="38.7" lengthAdjust="spacingAndGlyphs">GB1096-79</text>
<text x="459.9" y="638.8" fill="#00ff00" stroke="#00ff00" font-size="10.5" textLength="30.4" lengthAdjust="spacingAndGlyphs">? 20X90</text>
<text x="560" y="638.8" fill="#00ff00" stroke="#00ff00" font-size="10.5" text-anchor="middle" textLength="8.8" lengthAdjust="spacingAndGlyphs">45</text>
<text x="592.5" y="638.8" fill="#00ff00" stroke="#00ff00" font-size="10.5" text-anchor="middle" textLength="4.3" lengthAdjust="spacingAndGlyphs">1</text>
<text x="605.3" y="638.8" fill="#00ff00" stroke="#00ff00" font-size="10.5" textLength="13.8" lengthAdjust="spacingAndGlyphs">0.18</text>
<text x="627.3" y="638.8" fill="#00ff00" stroke="#00ff00" font-size="10.5" textLength="13.8" lengthAdjust="spacingAndGlyphs">0.18</text>
<text x="383" y="651.7" fill="#00ff00" stroke="#00ff00" font-size="10.5" text-anchor="middle" textLength="8.6" lengthAdjust="spacingAndGlyphs">16</text>
<text x="398.8" y="651.7" fill="#00ff00" stroke="#00ff00" font-size="10.5" textLength="30.1" lengthAdjust="spacingAndGlyphs">L764-53</text>
<text x="459.9" y="651.7" fill="#00ff00" stroke="#00ff00" font-size="10.5" textLength="11.4" lengthAdjust="spacingAndGlyphs"><tspan font-size="8.4">通</tspan>?</text>
<text x="560" y="651.7" fill="#00ff00" stroke="#00ff00" font-size="10.5" text-anchor="middle" textLength="22" lengthAdjust="spacingAndGlyphs">HT150</text>
<text x="592.5" y="651.7" fill="#00ff00" stroke="#00ff00" font-size="10.5" text-anchor="middle" textLength="4.3" lengthAdjust="spacingAndGlyphs">1</text>
<text x="605.3" y="651.7" fill="#00ff00" stroke="#00ff00" font-size="10.5" textLength="13.8" lengthAdjust="spacingAndGlyphs">5.01</text>
<text x="627.3" y="651.7" fill="#00ff00" stroke="#00ff00" font-size="10.5" textLength="13.8" lengthAdjust="spacingAndGlyphs">5.01</text>
<text x="383" y="664.6" fill="#00ff00" stroke="#00ff00" font-size="10.5" text-anchor="middle" textLength="8.6" lengthAdjust="spacingAndGlyphs">15</text>
<text x="398.8" y="664.6" fill="#00ff00" stroke="#00ff00" font-size="10.5" textLength="30.1" lengthAdjust="spacingAndGlyphs">L764-63</text>
<text x="459.9" y="664.6" fill="#00ff00" stroke="#00ff00" font-size="10.5" textLength="14.1" lengthAdjust="spacingAndGlyphs"><tspan font-size="8.4">隔套</tspan></text>
<text x="560" y="664.6" fill="#00ff00" stroke="#00ff00" font-size="10.5" text-anchor="middle" textLength="22" lengthAdjust="spacingAndGlyphs">HT150</text>
<text x="592.5" y="664.6" fill="#00ff00" stroke="#00ff00" font-size="10.5" text-anchor="middle" textLength="4.3" lengthAdjust="spacingAndGlyphs">2</text>
<text x="605.3" y="664.6" fill="#00ff00" stroke="#00ff00" font-size="10.5" textLength="13.8" lengthAdjust="spacingAndGlyphs">1.05</text>
<text x="627.3" y="664.6" fill="#00ff00" stroke="#00ff00" font-size="10.5" textLength="9.9" lengthAdjust="spacingAndGlyphs">2.1</text>
<text x="383" y="677.6" fill="#00ff00" stroke="#00ff00" font-size="10.5" text-anchor="middle" textLength="8.6" lengthAdjust="spacingAndGlyphs">14</text>
<text x="398.8" y="677.6" fill="#00ff00" stroke="#00ff00" font-size="10.5" textLength="30.1" lengthAdjust="spacingAndGlyphs">GB93-87</text>
<text x="459.9" y="677.6" fill="#00ff00" stroke="#00ff00" font-size="10.5" textLength="17.6" lengthAdjust="spacingAndGlyphs">??12</text>
<text x="560" y="677.6" fill="#00ff00" stroke="#00ff00" font-size="10.5" text-anchor="middle" textLength="17.6" lengthAdjust="spacingAndGlyphs">65Mn</text>
<text x="592.5" y="677.6" fill="#00ff00" stroke="#00ff00" font-size="10.5" text-anchor="middle" textLength="8.6" lengthAdjust="spacingAndGlyphs">12</text>
<text x="605.3" y="677.6" fill="#00ff00" stroke="#00ff00" font-size="10.5" textLength="21.6" lengthAdjust="spacingAndGlyphs">0.0048</text>
<text x="627.3" y="677.6" fill="#00ff00" stroke="#00ff00" font-size="10.5" textLength="21.6" lengthAdjust="spacingAndGlyphs">0.0516</text>
<text x="383" y="690.5" fill="#00ff00" stroke="#00ff00" font-size="10.5" text-anchor="middle" textLength="8.6" lengthAdjust="spacingAndGlyphs">13</text>
<text x="398.8" y="690.5" fill="#00ff00" stroke="#00ff00" font-size="10.5" textLength="38.7" lengthAdjust="spacingAndGlyphs">GB6170-86</text>
<text x="459.9" y="690.5" fill="#00ff00" stroke="#00ff00" font-size="10.5" textLength="27.3" lengthAdjust="spacingAndGlyphs"><tspan font-size="8.4">螺母</tspan>M12</text>
<text x="560" y="690.5" fill="#00ff00" stroke="#00ff00" font-size="10.5" text-anchor="middle" textLength="8.8" lengthAdjust="spacingAndGlyphs">8?</text>
<text x="592.5" y="690.5" fill="#00ff00" stroke="#00ff00" font-size="10.5" text-anchor="middle" textLength="8.6" lengthAdjust="spacingAndGlyphs">12</text>
<text x="605.3" y="690.5" fill="#00ff00" stroke="#00ff00" font-size="10.5" textLength="17.7" lengthAdjust="spacingAndGlyphs">0.016</text>
<text x="627.3" y="690.5" fill="#00ff00" stroke="#00ff00" font-size="10.5" textLength="17.7" lengthAdjust="spacingAndGlyphs">0.192</text>
<text x="383" y="703.5" fill="#00ff00" stroke="#00ff00" font-size="10.5" text-anchor="middle" textLength="8.6" lengthAdjust="spacingAndGlyphs">12</text>
<text x="398.8" y="703.5" fill="#00ff00" stroke="#00ff00" font-size="10.5" textLength="38.7" lengthAdjust="spacingAndGlyphs">GB5782-86</text>
<text x="459.9" y="703.5" fill="#00ff00" stroke="#00ff00" font-size="10.5" textLength="42.2" lengthAdjust="spacingAndGlyphs"><tspan font-size="8.4">螺</tspan>?M12X140</text>
<text x="560" y="703.5" fill="#00ff00" stroke="#00ff00" font-size="10.5" text-anchor="middle" textLength="15.6" lengthAdjust="spacingAndGlyphs">8.8?</text>
<text x="592.5" y="703.5" fill="#00ff00" stroke="#00ff00" font-size="10.5" text-anchor="middle" textLength="8.6" lengthAdjust="spacingAndGlyphs">12</text>
<text x="605.3" y="703.5" fill="#00ff00" stroke="#00ff00" font-size="10.5" textLength="17.7" lengthAdjust="spacingAndGlyphs">0.138</text>
<text x="627.3" y="703.5" fill="#00ff00" stroke="#00ff00" font-size="10.5" textLength="17.7" lengthAdjust="spacingAndGlyphs">1.656</text>
<text x="383" y="716.4" fill="#00ff00" stroke="#00ff00" font-size="10.5" text-anchor="middle" textLength="8.6" lengthAdjust="spacingAndGlyphs">11</text>
<text x="398.8" y="716.4" fill="#00ff00" stroke="#00ff00" font-size="10.5" textLength="38.7" lengthAdjust="spacingAndGlyphs">GB1096-79</text>
<text x="459.9" y="716.4" fill="#00ff00" stroke="#00ff00" font-size="10.5" textLength="34.8" lengthAdjust="spacingAndGlyphs">? 32X110</text>
<text x="560" y="716.4" fill="#00ff00" stroke="#00ff00" font-size="10.5" text-anchor="middle" textLength="8.8" lengthAdjust="spacingAndGlyphs">45</text>
<text x="592.5" y="716.4" fill="#00ff00" stroke="#00ff00" font-size="10.5" text-anchor="middle" textLength="4.3" lengthAdjust="spacingAndGlyphs">1</text>
<text x="605.3" y="716.4" fill="#00ff00" stroke="#00ff00" font-size="10.5" textLength="17.7" lengthAdjust="spacingAndGlyphs">0.466</text>
<text x="627.3" y="716.4" fill="#00ff00" stroke="#00ff00" font-size="10.5" textLength="17.7" lengthAdjust="spacingAndGlyphs">0.466</text>
<text x="383" y="729.3" fill="#00ff00" stroke="#00ff00" font-size="10.5" text-anchor="middle" textLength="8.6" lengthAdjust="spacingAndGlyphs">10</text>
<text x="398.8" y="729.3" fill="#00ff00" stroke="#00ff00" font-size="10.5" textLength="34" lengthAdjust="spacingAndGlyphs"> L764-62</text>
<text x="459.9" y="729.3" fill="#00ff00" stroke="#00ff00" font-size="10.5" textLength="15.8" lengthAdjust="spacingAndGlyphs">?<tspan font-size="8.4">板</tspan>?</text>
<text x="560" y="729.3" fill="#00ff00" stroke="#00ff00" font-size="10.5" text-anchor="middle" textLength="26.4" lengthAdjust="spacingAndGlyphs">Q195-F</text>
<text x="592.5" y="729.3" fill="#00ff00" stroke="#00ff00" font-size="10.5" text-anchor="middle" textLength="8.6" lengthAdjust="spacingAndGlyphs">2?</text>
<text x="605.3" y="729.3" fill="#00ff00" stroke="#00ff00" font-size="10.5" textLength="13.8" lengthAdjust="spacingAndGlyphs">0.28</text>
<text x="627.3" y="729.3" fill="#00ff00" stroke="#00ff00" font-size="10.5" textLength="13.8" lengthAdjust="spacingAndGlyphs">0.56</text>
<text x="383" y="742.3" fill="#00ff00" stroke="#00ff00" font-size="10.5" text-anchor="middle" textLength="4.3" lengthAdjust="spacingAndGlyphs">9</text>
<text x="398.8" y="742.3" fill="#00ff00" stroke="#00ff00" font-size="10.5" textLength="34" lengthAdjust="spacingAndGlyphs"> L764-61</text>
<text x="459.9" y="742.3" fill="#00ff00" stroke="#00ff00" font-size="10.5" textLength="8.8" lengthAdjust="spacingAndGlyphs">??</text>
<text x="560" y="742.3" fill="#0000ff" stroke="#0000ff" font-size="10.5" text-anchor="middle" textLength="15.8" lengthAdjust="spacingAndGlyphs">??<tspan font-size="8.4">板</tspan></text>
<text x="592.5" y="742.3" fill="#00ff00" stroke="#00ff00" font-size="10.5" text-anchor="middle" textLength="4.3" lengthAdjust="spacingAndGlyphs">4</text>
<text x="605.3" y="742.3" fill="#00ff00" stroke="#00ff00" font-size="10.5"></text>
<text x="627.3" y="742.3" fill="#00ff00" stroke="#00ff00" font-size="10.5"></text>
<text x="716.5" y="523.2" fill="#00ff00" stroke="#00ff00" font-size="10.5" text-anchor="middle" textLength="4.3" lengthAdjust="spacingAndGlyphs">8</text>
<text x="731.8" y="523.2" fill="#00ff00" stroke="#00ff00" font-size="10.5" textLength="30.1" lengthAdjust="spacingAndGlyphs">L764-52</text>
<text x="792.9" y="523.2" fill="#00ff00" stroke="#00ff00" font-size="10.5" textLength="8.8" lengthAdjust="spacingAndGlyphs">??</text>
<text x="893.5" y="523.2" fill="#00ff00" stroke="#00ff00" font-size="10.5" text-anchor="middle" textLength="22" lengthAdjust="spacingAndGlyphs">HT150</text>
<text x="925.5" y="523.2" fill="#00ff00" stroke="#00ff00" font-size="10.5" text-anchor="middle" textLength="4.3" lengthAdjust="spacingAndGlyphs">1</text>
<text x="938.3" y="523.2" fill="#00ff00" stroke="#00ff00" font-size="10.5" textLength="3.9" lengthAdjust="spacingAndGlyphs">4</text>
<text x="961.3" y="523.2" fill="#00ff00" stroke="#00ff00" font-size="10.5" textLength="3.9" lengthAdjust="spacingAndGlyphs">4</text>
<text x="716.5" y="536.2" fill="#00ff00" stroke="#00ff00" font-size="10.5" text-anchor="middle" textLength="4.3" lengthAdjust="spacingAndGlyphs">7</text>
<text x="731.8" y="536.2" fill="#00ff00" stroke="#00ff00" font-size="10.5" textLength="30.1" lengthAdjust="spacingAndGlyphs">L764-11</text>
<text x="792.9" y="536.2" fill="#00ff00" stroke="#00ff00" font-size="10.5" textLength="4.4" lengthAdjust="spacingAndGlyphs">?</text>
<text x="893.5" y="536.2" fill="#00ff00" stroke="#00ff00" font-size="10.5" text-anchor="middle" textLength="8.8" lengthAdjust="spacingAndGlyphs">45</text>
<text x="925.5" y="536.2" fill="#00ff00" stroke="#00ff00" font-size="10.5" text-anchor="middle" textLength="4.3" lengthAdjust="spacingAndGlyphs">1</text>
<text x="938.3" y="536.2" fill="#00ff00" stroke="#00ff00" font-size="10.5" textLength="7.8" lengthAdjust="spacingAndGlyphs">34</text>
<text x="961.3" y="536.2" fill="#00ff00" stroke="#00ff00" font-size="10.5" textLength="7.8" lengthAdjust="spacingAndGlyphs">34</text>
<text x="716.5" y="549.2" fill="#00ff00" stroke="#00ff00" font-size="10.5" text-anchor="middle" textLength="4.3" lengthAdjust="spacingAndGlyphs">6</text>
<text x="731.8" y="549.2" fill="#00ff00" stroke="#00ff00" font-size="10.5" textLength="34.4" lengthAdjust="spacingAndGlyphs">GB858-88</text>
<text x="792.9" y="549.2" fill="#00ff00" stroke="#00ff00" font-size="10.5" textLength="17.6" lengthAdjust="spacingAndGlyphs">??95</text>
<text x="893.5" y="549.2" fill="#00ff00" stroke="#00ff00" font-size="10.5" text-anchor="middle" textLength="26.4" lengthAdjust="spacingAndGlyphs">Q235-B</text>
<text x="925.5" y="549.2" fill="#00ff00" stroke="#00ff00" font-size="10.5" text-anchor="middle" textLength="4.3" lengthAdjust="spacingAndGlyphs">2</text>
<text x="938.3" y="549.2" fill="#00ff00" stroke="#00ff00" font-size="10.5" textLength="17.7" lengthAdjust="spacingAndGlyphs">0.065</text>
<text x="961.3" y="549.2" fill="#00ff00" stroke="#00ff00" font-size="10.5" textLength="13.8" lengthAdjust="spacingAndGlyphs">0.13</text>
<text x="716.5" y="562.2" fill="#00ff00" stroke="#00ff00" font-size="10.5" text-anchor="middle" textLength="4.3" lengthAdjust="spacingAndGlyphs">5</text>
<text x="731.8" y="562.2" fill="#00ff00" stroke="#00ff00" font-size="10.5" textLength="34.4" lengthAdjust="spacingAndGlyphs">GB812-88</text>
<text x="792.9" y="562.2" fill="#00ff00" stroke="#00ff00" font-size="10.5" textLength="40.5" lengthAdjust="spacingAndGlyphs">?<tspan font-size="8.4">螺母</tspan>M95X2</text>
<text x="893.5" y="562.2" fill="#00ff00" stroke="#00ff00" font-size="10.5" text-anchor="middle" textLength="8.8" lengthAdjust="spacingAndGlyphs">45</text>
<text x="925.5" y="562.2" fill="#00ff00" stroke="#00ff00" font-size="10.5" text-anchor="middle" textLength="4.3" lengthAdjust="spacingAndGlyphs">2</text>
<text x="938.3" y="562.2" fill="#00ff00" stroke="#00ff00" font-size="10.5" textLength="17.7" lengthAdjust="spacingAndGlyphs">0.825</text>
<text x="961.3" y="562.2" fill="#00ff00" stroke="#00ff00" font-size="10.5" textLength="13.8" lengthAdjust="spacingAndGlyphs">1.65</text>
<text x="716.5" y="575.2" fill="#00ff00" stroke="#00ff00" font-size="10.5" text-anchor="middle" textLength="4.3" lengthAdjust="spacingAndGlyphs">4</text>
<text x="731.8" y="575.2" fill="#00ff00" stroke="#00ff00" font-size="10.5" textLength="34.4" lengthAdjust="spacingAndGlyphs">GB297-84</text>
<text x="792.9" y="575.2" fill="#00ff00" stroke="#00ff00" font-size="10.5" textLength="45.8" lengthAdjust="spacingAndGlyphs">???<tspan font-size="8.4">承</tspan>  7520</text>
<text x="893.5" y="575.2" fill="#00ff00" stroke="#00ff00" font-size="10.5" text-anchor="middle" textLength="14.1" lengthAdjust="spacingAndGlyphs"><tspan font-size="8.4">成品</tspan></text>
<text x="925.5" y="575.2" fill="#00ff00" stroke="#00ff00" font-size="10.5" text-anchor="middle" textLength="4.3" lengthAdjust="spacingAndGlyphs">4</text>
<text x="938.3" y="575.2" fill="#00ff00" stroke="#00ff00" font-size="10.5" textLength="9.9" lengthAdjust="spacingAndGlyphs">5.1</text>
<text x="961.3" y="575.2" fill="#00ff00" stroke="#00ff00" font-size="10.5" textLength="13.8" lengthAdjust="spacingAndGlyphs">20.4</text>
<text x="984.5" y="575.2" fill="#00ff00" stroke="#00ff00" font-size="10.5" textLength="45" lengthAdjust="spacingAndGlyphs">180x100x49.5</text>
<text x="716.5" y="588.2" fill="#00ff00" stroke="#00ff00" font-size="10.5" text-anchor="middle" textLength="4.3" lengthAdjust="spacingAndGlyphs">3</text>
<text x="731.8" y="588.2" fill="#00ff00" stroke="#00ff00" font-size="10.5" textLength="30.1" lengthAdjust="spacingAndGlyphs">L764-21</text>
<text x="792.9" y="588.2" fill="#00ff00" stroke="#00ff00" font-size="10.5" textLength="32.6" lengthAdjust="spacingAndGlyphs"><tspan font-size="8.4">角型</tspan>?<tspan font-size="8.4">承箱</tspan></text>
<text x="893.5" y="588.2" fill="#00ff00" stroke="#00ff00" font-size="10.5" text-anchor="middle" textLength="35.2" lengthAdjust="spacingAndGlyphs">QT400-15</text>
<text x="925.5" y="588.2" fill="#00ff00" stroke="#00ff00" font-size="10.5" text-anchor="middle" textLength="4.3" lengthAdjust="spacingAndGlyphs">2</text>
<text x="938.3" y="588.2" fill="#00ff00" stroke="#00ff00" font-size="10.5" textLength="7.8" lengthAdjust="spacingAndGlyphs">30</text>
<text x="961.3" y="588.2" fill="#00ff00" stroke="#00ff00" font-size="10.5" textLength="7.8" lengthAdjust="spacingAndGlyphs">60</text>
<text x="716.5" y="601.2" fill="#00ff00" stroke="#00ff00" font-size="10.5" text-anchor="middle" textLength="4.3" lengthAdjust="spacingAndGlyphs">2</text>
<text x="731.8" y="601.2" fill="#00ff00" stroke="#00ff00" font-size="10.5" textLength="30.1" lengthAdjust="spacingAndGlyphs">L764-51</text>
<text x="792.9" y="601.2" fill="#00ff00" stroke="#00ff00" font-size="10.5" textLength="11.4" lengthAdjust="spacingAndGlyphs"><tspan font-size="8.4">通</tspan>?</text>
<text x="893.5" y="601.2" fill="#00ff00" stroke="#00ff00" font-size="10.5" text-anchor="middle" textLength="22" lengthAdjust="spacingAndGlyphs">HT150</text>
<text x="925.5" y="601.2" fill="#00ff00" stroke="#00ff00" font-size="10.5" text-anchor="middle" textLength="4.3" lengthAdjust="spacingAndGlyphs">2</text>
<text x="938.3" y="601.2" fill="#00ff00" stroke="#00ff00" font-size="10.5" textLength="13.8" lengthAdjust="spacingAndGlyphs">2.17</text>
<text x="961.3" y="601.2" fill="#00ff00" stroke="#00ff00" font-size="10.5" textLength="13.8" lengthAdjust="spacingAndGlyphs">4.34</text>
<text x="716.5" y="613.2" fill="#00ff00" stroke="#00ff00" font-size="10.5" text-anchor="middle" textLength="4.3" lengthAdjust="spacingAndGlyphs">1</text>
<text x="731.8" y="613.2" fill="#00ff00" stroke="#00ff00" font-size="10.5" textLength="30.1" lengthAdjust="spacingAndGlyphs">L764-31</text>
<text x="792.9" y="613.2" fill="#00ff00" stroke="#00ff00" font-size="10.5" textLength="33.4" lengthAdjust="spacingAndGlyphs"><tspan font-size="8.4">主</tspan>??ø500</text>
<text x="893.5" y="613.2" fill="#00ff00" stroke="#00ff00" font-size="10.5" text-anchor="middle" textLength="35.2" lengthAdjust="spacingAndGlyphs">ZG50SiMn</text>
<text x="925.5" y="613.2" fill="#00ff00" stroke="#00ff00" font-size="10.5" text-anchor="middle" textLength="4.3" lengthAdjust="spacingAndGlyphs">1</text>
<text x="938.3" y="613.2" fill="#00ff00" stroke="#00ff00" font-size="10.5" textLength="10.1" lengthAdjust="spacingAndGlyphs">?<tspan font-size="8.4">表</tspan></text>
<text x="961.3" y="613.2" fill="#00ff00" stroke="#00ff00" font-size="10.5" textLength="10.1" lengthAdjust="spacingAndGlyphs">?<tspan font-size="8.4">表</tspan></text>
<text x="709" y="632.5" fill="#00ff00" stroke="#00ff00" font-size="13.5" textLength="15" lengthAdjust="spacingAndGlyphs"><tspan font-size="10.8">序号</tspan></text>
<text x="738" y="632.5" fill="#00ff00" stroke="#00ff00" font-size="13.5" textLength="7" lengthAdjust="spacingAndGlyphs"><tspan font-size="10.8">代</tspan></text>
<text x="761" y="632.5" fill="#00ff00" stroke="#00ff00" font-size="13.5" textLength="7" lengthAdjust="spacingAndGlyphs"><tspan font-size="10.8">号</tspan></text>
<text x="807.5" y="632.5" fill="#00ff00" stroke="#00ff00" font-size="13.5" textLength="7" lengthAdjust="spacingAndGlyphs"><tspan font-size="10.8">名</tspan></text>
<text x="833" y="632.5" fill="#00ff00" stroke="#00ff00" font-size="13.5" textLength="7" lengthAdjust="spacingAndGlyphs"><tspan font-size="10.8">称</tspan></text>
<text x="880.5" y="632.5" fill="#00ff00" stroke="#00ff00" font-size="13.5" textLength="6.5" lengthAdjust="spacingAndGlyphs"><tspan font-size="10.8">材</tspan></text>
<text x="893" y="632.5" fill="#00ff00" stroke="#00ff00" font-size="13.5" textLength="6.5" lengthAdjust="spacingAndGlyphs"><tspan font-size="10.8">料</tspan></text>
<text x="916.5" y="632" fill="#00ff00" stroke="#00ff00" font-size="12.5" textLength="13.5" lengthAdjust="spacingAndGlyphs"><tspan font-size="10">件数</tspan></text>
<text x="939.5" y="623.8" fill="#00ff00" stroke="#00ff00" font-size="8.5" textLength="8.8" lengthAdjust="spacingAndGlyphs">?<tspan font-size="6.8">件</tspan></text>
<text x="962" y="623.8" fill="#00ff00" stroke="#00ff00" font-size="8.5" textLength="8.8" lengthAdjust="spacingAndGlyphs"><tspan font-size="6.8">共</tspan>?</text>
<text x="944" y="635.3" fill="#00ff00" stroke="#00ff00" font-size="8.5" textLength="8.3" lengthAdjust="spacingAndGlyphs">?<tspan font-size="6.8">量</tspan></text>
<text x="962" y="635.3" fill="#00ff00" stroke="#00ff00" font-size="8" textLength="10.4" lengthAdjust="spacingAndGlyphs">(kg)</text>
<text x="991.5" y="632.5" fill="#00ff00" stroke="#00ff00" font-size="12" textLength="5" lengthAdjust="spacingAndGlyphs">?</text>
<text x="1010.5" y="632.5" fill="#00ff00" stroke="#00ff00" font-size="13.5" textLength="7.5" lengthAdjust="spacingAndGlyphs"><tspan font-size="10.8">注</tspan></text>
<text x="707" y="687.5" fill="#00ff00" stroke="#00ff00" font-size="9" textLength="8" lengthAdjust="spacingAndGlyphs">??</text>
<text x="721.5" y="687.5" fill="#00ff00" stroke="#00ff00" font-size="9" textLength="8.8" lengthAdjust="spacingAndGlyphs">?<tspan font-size="7.2">数</tspan></text>
<text x="738" y="687.5" fill="#00ff00" stroke="#00ff00" font-size="9" textLength="10.9" lengthAdjust="spacingAndGlyphs"><tspan font-size="7.2">分区</tspan></text>
<text x="757" y="687.5" fill="#00ff00" stroke="#00ff00" font-size="9" textLength="24.8" lengthAdjust="spacingAndGlyphs"><tspan font-size="7.2">更改文件号</tspan></text>
<text x="790" y="687.5" fill="#00ff00" stroke="#00ff00" font-size="9" textLength="8.8" lengthAdjust="spacingAndGlyphs">?<tspan font-size="7.2">名</tspan></text>
<text x="806.5" y="687.5" fill="#00ff00" stroke="#00ff00" font-size="9" textLength="11.5" lengthAdjust="spacingAndGlyphs"><tspan font-size="7.2">日期</tspan></text>
<text x="708" y="698.7" fill="#00ff00" stroke="#00ff00" font-size="9" textLength="11" lengthAdjust="spacingAndGlyphs">? ?</text>
<text x="708" y="709.8" fill="#00ff00" stroke="#00ff00" font-size="9" textLength="11" lengthAdjust="spacingAndGlyphs">? ?</text>
<text x="708" y="720.6" fill="#00ff00" stroke="#00ff00" font-size="9" textLength="11.2" lengthAdjust="spacingAndGlyphs"><tspan font-size="7.2">审</tspan> ?</text>
<text x="708" y="731.3" fill="#00ff00" stroke="#00ff00" font-size="9" textLength="13" lengthAdjust="spacingAndGlyphs">?<tspan font-size="7.2">准化</tspan></text>
<text x="708" y="742" fill="#00ff00" stroke="#00ff00" font-size="9" textLength="12.6" lengthAdjust="spacingAndGlyphs"><tspan font-size="7.2">工</tspan> ?</text>
<text x="762" y="698.7" fill="#00ff00" stroke="#00ff00" font-size="9" textLength="18.7" lengthAdjust="spacingAndGlyphs"><tspan font-size="7.2">主任</tspan>??</text>
<text x="762.5" y="709.8" fill="#00ff00" stroke="#00ff00" font-size="9" textLength="17.3" lengthAdjust="spacingAndGlyphs"><tspan font-size="7.2">室主任</tspan></text>
<text x="763" y="720.6" fill="#00ff00" stroke="#00ff00" font-size="9" textLength="15.2" lengthAdjust="spacingAndGlyphs">????</text>
<text x="763" y="742" fill="#00ff00" stroke="#00ff00" font-size="9" textLength="16.6" lengthAdjust="spacingAndGlyphs">?<tspan font-size="7.2">核</tspan>??</text>
<text x="822" y="650.5" fill="#00ff00" stroke="#00ff00" font-size="9" textLength="5.8" lengthAdjust="spacingAndGlyphs"><tspan font-size="7.2">第</tspan></text>
<text x="832.5" y="650.5" fill="#00ff00" stroke="#00ff00" font-size="9" textLength="8.4" lengthAdjust="spacingAndGlyphs">1?</text>
<text x="851" y="650.5" fill="#00ff00" stroke="#00ff00" font-size="9" textLength="5.8" lengthAdjust="spacingAndGlyphs"><tspan font-size="7.2">共</tspan></text>
<text x="861.5" y="650.5" fill="#00ff00" stroke="#00ff00" font-size="9" textLength="8.4" lengthAdjust="spacingAndGlyphs">1?</text>
<text x="876" y="650.5" fill="#00ff00" stroke="#00ff00" font-size="9" textLength="14.7" lengthAdjust="spacingAndGlyphs">?<tspan font-size="7.2">段</tspan>??</text>
<text x="924.5" y="650.5" fill="#00ff00" stroke="#00ff00" font-size="9" textLength="4.5" lengthAdjust="spacingAndGlyphs">B</text>
<text x="833" y="665" fill="#00ff00" stroke="#00ff00" font-size="9" textLength="8.3" lengthAdjust="spacingAndGlyphs">?<tspan font-size="7.2">量</tspan></text>
<text x="851" y="665" fill="#00ff00" stroke="#00ff00" font-size="8" textLength="10.8" lengthAdjust="spacingAndGlyphs">(kg)</text>
<text x="880.5" y="665" fill="#00ff00" stroke="#00ff00" font-size="9" textLength="10.2" lengthAdjust="spacingAndGlyphs"><tspan font-size="7.2">比例</tspan></text>
<text x="904.5" y="665" fill="#00ff00" stroke="#00ff00" font-size="9" textLength="10.9" lengthAdjust="spacingAndGlyphs"><tspan font-size="7.2">日期</tspan></text>
<text x="841" y="680.5" fill="#0000ff" stroke="#0000ff" font-size="9" textLength="9.4" lengthAdjust="spacingAndGlyphs">?<tspan font-size="7.2">重</tspan></text>
<text x="881.5" y="680.5" fill="#0000ff" stroke="#0000ff" font-size="9" textLength="9.9" lengthAdjust="spacingAndGlyphs">1:3</text>
<text x="902" y="680.5" fill="#0000ff" stroke="#0000ff" font-size="9" textLength="19.4" lengthAdjust="spacingAndGlyphs">1996.6</text>
<text x="873.5" y="704.8" fill="#ffffff" font-size="15" text-anchor="middle" textLength="39" lengthAdjust="spacingAndGlyphs">主????</text>
<text x="876.5" y="720.3" fill="#ffffff" font-size="13.5" text-anchor="middle" textLength="24" lengthAdjust="spacingAndGlyphs">ø500</text>
<text x="878" y="739.6" fill="#ffffff" font-size="13.5" text-anchor="middle" textLength="20.5" lengthAdjust="spacingAndGlyphs">部件</text>
<text x="977.8" y="671.5" fill="#ffffff" font-size="18" text-anchor="middle" textLength="33.5" lengthAdjust="spacingAndGlyphs">L764</text>
<text x="987.5" y="712" text-anchor="middle" font-size="23" font-weight="bold" font-style="italic" fill="#000" stroke="#fff" stroke-width="1" textLength="50" lengthAdjust="spacingAndGlyphs">OCW</text>
<text x="989.5" y="735.3" fill="#ffffff" font-size="13.5" text-anchor="middle" textLength="70" lengthAdjust="spacingAndGlyphs">大?起重机器?</text>
<text x="988" y="746.5" fill="#00ff00" stroke="#00ff00" font-size="8" text-anchor="middle" textLength="45" lengthAdjust="spacingAndGlyphs">制造日期及编号</text>
</g>
</svg>
</body></html>
